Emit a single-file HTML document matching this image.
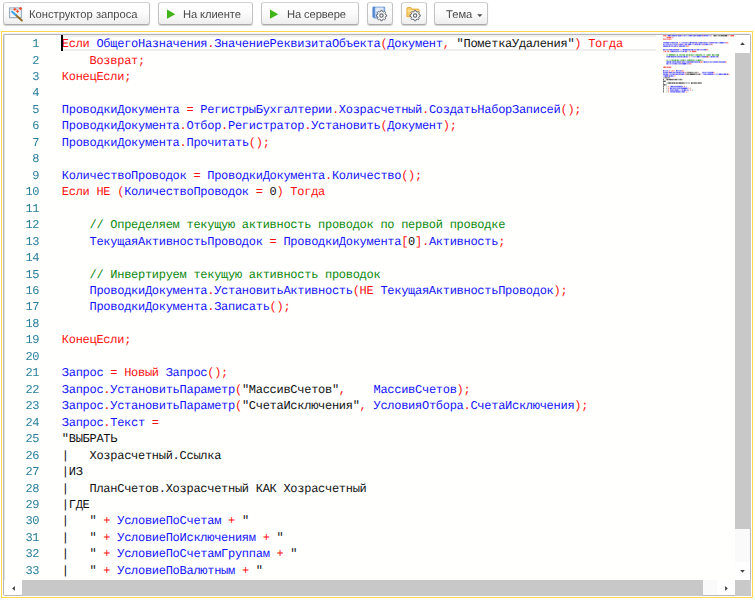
<!DOCTYPE html>
<html><head><meta charset="utf-8"><title>Консоль кода</title>
<style>
html,body{margin:0;padding:0;}
body{width:755px;height:600px;overflow:hidden;background:#fff;position:relative;font-family:"Liberation Sans",sans-serif;}
.btn{position:absolute;top:2px;height:23px;box-sizing:border-box;border:1px solid #c3c3c3;border-top-color:#d2d2d2;border-bottom-color:#a9a9a9;border-radius:3px;background:linear-gradient(#ffffff 0%,#fcfcfc 45%,#eeeeee 100%);box-shadow:0 1px 1px rgba(0,0,0,0.18);}
.btn .lbl{position:absolute;top:6px;font-size:11.2px;line-height:13px;color:#4a4a4a;white-space:pre;text-rendering:geometricPrecision;will-change:transform;}
.btn svg{position:absolute;}
.frame{position:absolute;left:1px;top:31px;width:752px;height:567px;box-sizing:border-box;border:1px solid #ffd84d;background:#fff;}
.inner{position:absolute;left:3px;top:34px;width:748px;height:562px;box-shadow:0 -1px 0 #f1f1f1, inset 1px 0 0 #e4e4e4;box-sizing:border-box;background:#fffffe;border:1px solid #b9b9b9;border-top-color:#b4b4b4;border-radius:2px;}
.ln,.t{position:absolute;font-family:"Liberation Mono",monospace;font-size:12.00px;line-height:16px;height:16px;letter-spacing:-0.2752px;white-space:pre;text-rendering:geometricPrecision;}
.ln{left:5px;width:34.3px;text-align:right;color:#2a7f9a;will-change:transform;}
.mm{position:absolute;left:663px;top:35px;}
.cur{position:absolute;left:61.3px;top:34.6px;width:2px;height:16.4px;background:#000;}
.clh{position:absolute;left:62px;top:35px;width:594px;height:16px;box-sizing:border-box;border-top:2px solid #f0f0f0;border-bottom:2px solid #eeeeee;}
.vs{position:absolute;left:735px;top:35px;width:15px;height:545px;background:#fafafa;}
.hs{position:absolute;left:4px;top:580px;width:731px;height:15px;background:#fafafa;}
.corner{position:absolute;left:735px;top:580px;width:15.5px;height:15.5px;background:#c9c9c9;}
.thumb{position:absolute;background:#c8c8c8;}
.ab{position:absolute;background:#fefefe;}
</style></head>
<body>
<!-- toolbar -->
<div class="btn" style="left:3px;width:147px;">
<svg width="16" height="16" viewBox="0 0 16 16" style="left:5.2px;top:3.5px">
<rect x="0.600" y="0.900" width="11.700" height="9.800" fill="#f3f5f9" stroke="#8fa0b8" stroke-width="1"/>
<rect x="1.100" y="1.400" width="10.700" height="1.700" fill="#cfd8e6"/>
<line x1="3.100" y1="4.800" x2="7" y2="8.100" stroke="#41a2ea" stroke-width="2.100" stroke-linecap="round"/>
<line x1="7.500" y1="8.600" x2="12.900" y2="13.500" stroke="#8a6a1c" stroke-width="1.900" stroke-linecap="round"/>
<path d="M5.90 0.40L6.61 1.59L7.80 2.30L6.61 3.01L5.90 4.20L5.19 3.01L4.00 2.30L5.19 1.59z" fill="#f4502a"/><path d="M8.50 2.40L9.21 3.59L10.40 4.30L9.21 5.01L8.50 6.20L7.79 5.01L6.60 4.30L7.79 3.59z" fill="#f4502a"/><path d="M11.50 -0.50L12.28 0.72L13.50 1.50L12.28 2.28L11.50 3.50L10.72 2.28L9.50 1.50L10.72 0.72z" fill="#f4502a"/>
</svg>
<span class="lbl" style="left:25.1px">Конструктор запроса</span></div>

<div class="btn" style="left:158px;width:95px;">
<svg width="10" height="11" viewBox="0 0 10 11" style="left:7px;top:6px"><path d="M1 0.5L9.300 5.150L1 9.800z" fill="#41b417"/></svg>
<span class="lbl" style="left:23.800px;letter-spacing:-0.1px">На клиенте</span></div>

<div class="btn" style="left:261px;width:97.7px;">
<svg width="10" height="11" viewBox="0 0 10 11" style="left:7px;top:6px"><path d="M1 0.5L9.300 5.150L1 9.800z" fill="#41b417"/></svg>
<span class="lbl" style="left:25px;letter-spacing:-0.1px">На сервере</span></div>

<div class="btn" style="left:367px;width:25.6px;">
<svg width="16" height="16" viewBox="0 0 16 16" style="left:4px;top:3px">
<path d="M1.1 1.2h11.600v10.800h-10.600l-1-1z" fill="#b9d0f0" stroke="#5c8bd0" stroke-width="0.9"/>
<rect x="0.7" y="0.800" width="2.100" height="10.700" fill="#4f84d2"/>
<rect x="3.800" y="1.7" width="7.2" height="3.600" fill="#eef3fb"/>
<rect x="3.800" y="2.700" width="7.2" height="0.7" fill="#c5d3e8"/>
<g transform="translate(9.5 9.6)"><path d="M-0.88 -4.11L-0.69 -5.15L0.69 -5.15L0.88 -4.11L2.28 -3.53L3.15 -4.13L4.13 -3.15L3.53 -2.28L4.11 -0.88L5.15 -0.69L5.15 0.69L4.11 0.88L3.53 2.28L4.13 3.15L3.15 4.13L2.28 3.53L0.88 4.11L0.69 5.15L-0.69 5.15L-0.88 4.11L-2.28 3.53L-3.15 4.13L-4.13 3.15L-3.53 2.28L-4.11 0.88L-5.15 0.69L-5.15 -0.69L-4.11 -0.88L-3.53 -2.28L-4.13 -3.15L-3.15 -4.13L-2.28 -3.53z" fill="#f7f7f7" stroke="#646a72" stroke-width="1" stroke-linejoin="round"/><circle r="1.7" fill="#fdfdfd" stroke="#646a72" stroke-width="1.1"/></g>
</svg></div>

<div class="btn" style="left:400.5px;width:26px;">
<svg width="16" height="16" viewBox="0 0 16 16" style="left:4.5px;top:3px">
<path d="M0.9 2.500q0-0.900 0.900-0.900h3.200l1.200 1.500h5.900q0.900 0 0.900 0.900v6.700h-12.100z" fill="#f9cf6e" stroke="#e7a531" stroke-width="0.9"/>
<path d="M1.4 4.2h11.100v1.300h-11.100z" fill="#fbe3a6"/>
<g transform="translate(9.1 9.6)"><path d="M-0.88 -4.11L-0.69 -5.15L0.69 -5.15L0.88 -4.11L2.28 -3.53L3.15 -4.13L4.13 -3.15L3.53 -2.28L4.11 -0.88L5.15 -0.69L5.15 0.69L4.11 0.88L3.53 2.28L4.13 3.15L3.15 4.13L2.28 3.53L0.88 4.11L0.69 5.15L-0.69 5.15L-0.88 4.11L-2.28 3.53L-3.15 4.13L-4.13 3.15L-3.53 2.28L-4.11 0.88L-5.15 0.69L-5.15 -0.69L-4.11 -0.88L-3.53 -2.28L-4.13 -3.15L-3.15 -4.13L-2.28 -3.53z" fill="#f7f7f7" stroke="#646a72" stroke-width="1" stroke-linejoin="round"/><circle r="1.7" fill="#fdfdfd" stroke="#646a72" stroke-width="1.1"/></g>
</svg></div>

<div class="btn" style="left:434px;width:54px;">
<span class="lbl" style="left:10.8px">Тема</span>
<svg width="6" height="4" viewBox="0 0 6 4" style="left:41.5px;top:11px"><path d="M0.2 0.2h5.2L2.800 3z" fill="#4a4a4a"/></svg>
</div>

<!-- editor -->
<div class="frame"></div>
<div class="inner"></div>
<div class="clh"></div>
<div class="ln" style="top:36.00px">1</div>
<span class="t" style="left:61.80px;top:36.00px;color:#ff1010">Если</span>
<span class="t" style="left:96.43px;top:36.00px;color:#1212ff">ОбщегоНазначения</span>
<span class="t" style="left:207.25px;top:36.00px;color:#ff1010">.</span>
<span class="t" style="left:214.17px;top:36.00px;color:#1212ff">ЗначениеРеквизитаОбъекта</span>
<span class="t" style="left:380.40px;top:36.00px;color:#ff1010">(</span>
<span class="t" style="left:387.32px;top:36.00px;color:#1212ff">Документ</span>
<span class="t" style="left:442.73px;top:36.00px;color:#ff1010">,</span>
<span class="t" style="left:456.58px;top:36.00px;color:#101010">"ПометкаУдаления"</span>
<span class="t" style="left:574.32px;top:36.00px;color:#ff1010">)</span>
<span class="t" style="left:588.18px;top:36.00px;color:#ff1010">Тогда</span>
<div class="ln" style="top:53.00px">2</div>
<span class="t" style="left:89.50px;top:53.00px;color:#ff1010">Возврат</span>
<span class="t" style="left:137.99px;top:53.00px;color:#ff1010">;</span>
<div class="ln" style="top:69.00px">3</div>
<span class="t" style="left:61.80px;top:69.00px;color:#ff1010">КонецЕсли</span>
<span class="t" style="left:124.13px;top:69.00px;color:#ff1010">;</span>
<div class="ln" style="top:85.00px">4</div>
<div class="ln" style="top:102.00px">5</div>
<span class="t" style="left:61.80px;top:102.00px;color:#1212ff">ПроводкиДокумента</span>
<span class="t" style="left:186.47px;top:102.00px;color:#ff1010">=</span>
<span class="t" style="left:200.32px;top:102.00px;color:#1212ff">РегистрыБухгалтерии</span>
<span class="t" style="left:331.91px;top:102.00px;color:#ff1010">.</span>
<span class="t" style="left:338.84px;top:102.00px;color:#1212ff">Хозрасчетный</span>
<span class="t" style="left:421.95px;top:102.00px;color:#ff1010">.</span>
<span class="t" style="left:428.88px;top:102.00px;color:#1212ff">СоздатьНаборЗаписей</span>
<span class="t" style="left:560.47px;top:102.00px;color:#ff1010">();</span>
<div class="ln" style="top:118.00px">6</div>
<span class="t" style="left:61.80px;top:118.00px;color:#1212ff">ПроводкиДокумента</span>
<span class="t" style="left:179.54px;top:118.00px;color:#ff1010">.</span>
<span class="t" style="left:186.47px;top:118.00px;color:#1212ff">Отбор</span>
<span class="t" style="left:221.10px;top:118.00px;color:#ff1010">.</span>
<span class="t" style="left:228.02px;top:118.00px;color:#1212ff">Регистратор</span>
<span class="t" style="left:304.21px;top:118.00px;color:#ff1010">.</span>
<span class="t" style="left:311.14px;top:118.00px;color:#1212ff">Установить</span>
<span class="t" style="left:380.40px;top:118.00px;color:#ff1010">(</span>
<span class="t" style="left:387.32px;top:118.00px;color:#1212ff">Документ</span>
<span class="t" style="left:442.73px;top:118.00px;color:#ff1010">);</span>
<div class="ln" style="top:135.00px">7</div>
<span class="t" style="left:61.80px;top:135.00px;color:#1212ff">ПроводкиДокумента</span>
<span class="t" style="left:179.54px;top:135.00px;color:#ff1010">.</span>
<span class="t" style="left:186.47px;top:135.00px;color:#1212ff">Прочитать</span>
<span class="t" style="left:248.80px;top:135.00px;color:#ff1010">();</span>
<div class="ln" style="top:151.00px">8</div>
<div class="ln" style="top:168.00px">9</div>
<span class="t" style="left:61.80px;top:168.00px;color:#1212ff">КоличествоПроводок</span>
<span class="t" style="left:193.39px;top:168.00px;color:#ff1010">=</span>
<span class="t" style="left:207.25px;top:168.00px;color:#1212ff">ПроводкиДокумента</span>
<span class="t" style="left:324.99px;top:168.00px;color:#ff1010">.</span>
<span class="t" style="left:331.91px;top:168.00px;color:#1212ff">Количество</span>
<span class="t" style="left:401.17px;top:168.00px;color:#ff1010">();</span>
<div class="ln" style="top:184.00px">10</div>
<span class="t" style="left:61.80px;top:184.00px;color:#ff1010">Если</span>
<span class="t" style="left:96.43px;top:184.00px;color:#ff1010">НЕ</span>
<span class="t" style="left:117.21px;top:184.00px;color:#ff1010">(</span>
<span class="t" style="left:124.13px;top:184.00px;color:#1212ff">КоличествоПроводок</span>
<span class="t" style="left:255.73px;top:184.00px;color:#ff1010">=</span>
<span class="t" style="left:269.58px;top:184.00px;color:#101010">0</span>
<span class="t" style="left:276.51px;top:184.00px;color:#ff1010">)</span>
<span class="t" style="left:290.36px;top:184.00px;color:#ff1010">Тогда</span>
<div class="ln" style="top:201.00px">11</div>
<div class="ln" style="top:217.00px">12</div>
<span class="t" style="left:89.50px;top:217.00px;color:#0c880c">// Определяем текущую активность проводок по первой проводке</span>
<div class="ln" style="top:234.00px">13</div>
<span class="t" style="left:89.50px;top:234.00px;color:#1212ff">ТекущаяАктивностьПроводок</span>
<span class="t" style="left:269.58px;top:234.00px;color:#ff1010">=</span>
<span class="t" style="left:283.43px;top:234.00px;color:#1212ff">ПроводкиДокумента</span>
<span class="t" style="left:401.17px;top:234.00px;color:#ff1010">[</span>
<span class="t" style="left:408.10px;top:234.00px;color:#101010">0</span>
<span class="t" style="left:415.03px;top:234.00px;color:#ff1010">].</span>
<span class="t" style="left:428.88px;top:234.00px;color:#1212ff">Активность</span>
<span class="t" style="left:498.14px;top:234.00px;color:#ff1010">;</span>
<div class="ln" style="top:250.00px">14</div>
<div class="ln" style="top:267.00px">15</div>
<span class="t" style="left:89.50px;top:267.00px;color:#0c880c">// Инвертируем текущую активность проводок</span>
<div class="ln" style="top:283.00px">16</div>
<span class="t" style="left:89.50px;top:283.00px;color:#1212ff">ПроводкиДокумента</span>
<span class="t" style="left:207.25px;top:283.00px;color:#ff1010">.</span>
<span class="t" style="left:214.17px;top:283.00px;color:#1212ff">УстановитьАктивность</span>
<span class="t" style="left:352.69px;top:283.00px;color:#ff1010">(</span>
<span class="t" style="left:359.62px;top:283.00px;color:#ff1010">НЕ</span>
<span class="t" style="left:380.40px;top:283.00px;color:#1212ff">ТекущаяАктивностьПроводок</span>
<span class="t" style="left:553.55px;top:283.00px;color:#ff1010">);</span>
<div class="ln" style="top:299.00px">17</div>
<span class="t" style="left:89.50px;top:299.00px;color:#1212ff">ПроводкиДокумента</span>
<span class="t" style="left:207.25px;top:299.00px;color:#ff1010">.</span>
<span class="t" style="left:214.17px;top:299.00px;color:#1212ff">Записать</span>
<span class="t" style="left:269.58px;top:299.00px;color:#ff1010">();</span>
<div class="ln" style="top:316.00px">18</div>
<div class="ln" style="top:332.00px">19</div>
<span class="t" style="left:61.80px;top:332.00px;color:#ff1010">КонецЕсли</span>
<span class="t" style="left:124.13px;top:332.00px;color:#ff1010">;</span>
<div class="ln" style="top:349.00px">20</div>
<div class="ln" style="top:365.00px">21</div>
<span class="t" style="left:61.80px;top:365.00px;color:#1212ff">Запрос</span>
<span class="t" style="left:110.28px;top:365.00px;color:#ff1010">=</span>
<span class="t" style="left:124.13px;top:365.00px;color:#ff1010">Новый</span>
<span class="t" style="left:165.69px;top:365.00px;color:#1212ff">Запрос</span>
<span class="t" style="left:207.25px;top:365.00px;color:#ff1010">();</span>
<div class="ln" style="top:382.00px">22</div>
<span class="t" style="left:61.80px;top:382.00px;color:#1212ff">Запрос</span>
<span class="t" style="left:103.36px;top:382.00px;color:#ff1010">.</span>
<span class="t" style="left:110.28px;top:382.00px;color:#1212ff">УстановитьПараметр</span>
<span class="t" style="left:234.95px;top:382.00px;color:#ff1010">(</span>
<span class="t" style="left:241.88px;top:382.00px;color:#101010">"МассивСчетов"</span>
<span class="t" style="left:338.84px;top:382.00px;color:#ff1010">,</span>
<span class="t" style="left:373.47px;top:382.00px;color:#1212ff">МассивСчетов</span>
<span class="t" style="left:456.58px;top:382.00px;color:#ff1010">);</span>
<div class="ln" style="top:398.00px">23</div>
<span class="t" style="left:61.80px;top:398.00px;color:#1212ff">Запрос</span>
<span class="t" style="left:103.36px;top:398.00px;color:#ff1010">.</span>
<span class="t" style="left:110.28px;top:398.00px;color:#1212ff">УстановитьПараметр</span>
<span class="t" style="left:234.95px;top:398.00px;color:#ff1010">(</span>
<span class="t" style="left:241.88px;top:398.00px;color:#101010">"СчетаИсключения"</span>
<span class="t" style="left:359.62px;top:398.00px;color:#ff1010">,</span>
<span class="t" style="left:373.47px;top:398.00px;color:#1212ff">УсловияОтбора</span>
<span class="t" style="left:463.51px;top:398.00px;color:#ff1010">.</span>
<span class="t" style="left:470.43px;top:398.00px;color:#1212ff">СчетаИсключения</span>
<span class="t" style="left:574.32px;top:398.00px;color:#ff1010">);</span>
<div class="ln" style="top:415.00px">24</div>
<span class="t" style="left:61.80px;top:415.00px;color:#1212ff">Запрос</span>
<span class="t" style="left:103.36px;top:415.00px;color:#ff1010">.</span>
<span class="t" style="left:110.28px;top:415.00px;color:#1212ff">Текст</span>
<span class="t" style="left:151.84px;top:415.00px;color:#ff1010">=</span>
<div class="ln" style="top:431.00px">25</div>
<span class="t" style="left:61.80px;top:431.00px;color:#101010">"ВЫБРАТЬ</span>
<div class="ln" style="top:448.00px">26</div>
<span class="t" style="left:61.80px;top:448.00px;color:#101010">|   Хозрасчетный.Ссылка</span>
<div class="ln" style="top:464.00px">27</div>
<span class="t" style="left:61.80px;top:464.00px;color:#101010">|ИЗ</span>
<div class="ln" style="top:481.00px">28</div>
<span class="t" style="left:61.80px;top:481.00px;color:#101010">|   ПланСчетов.Хозрасчетный КАК Хозрасчетный</span>
<div class="ln" style="top:497.00px">29</div>
<span class="t" style="left:61.80px;top:497.00px;color:#101010">|ГДЕ</span>
<div class="ln" style="top:513.00px">30</div>
<span class="t" style="left:61.80px;top:513.00px;color:#101010">|   "</span>
<span class="t" style="left:103.36px;top:513.00px;color:#ff1010">+</span>
<span class="t" style="left:117.21px;top:513.00px;color:#1212ff">УсловиеПоСчетам</span>
<span class="t" style="left:228.02px;top:513.00px;color:#ff1010">+</span>
<span class="t" style="left:241.88px;top:513.00px;color:#101010">"</span>
<div class="ln" style="top:530.00px">31</div>
<span class="t" style="left:61.80px;top:530.00px;color:#101010">|   "</span>
<span class="t" style="left:103.36px;top:530.00px;color:#ff1010">+</span>
<span class="t" style="left:117.21px;top:530.00px;color:#1212ff">УсловиеПоИсключениям</span>
<span class="t" style="left:262.65px;top:530.00px;color:#ff1010">+</span>
<span class="t" style="left:276.51px;top:530.00px;color:#101010">"</span>
<div class="ln" style="top:546.00px">32</div>
<span class="t" style="left:61.80px;top:546.00px;color:#101010">|   "</span>
<span class="t" style="left:103.36px;top:546.00px;color:#ff1010">+</span>
<span class="t" style="left:117.21px;top:546.00px;color:#1212ff">УсловиеПоСчетамГруппам</span>
<span class="t" style="left:276.51px;top:546.00px;color:#ff1010">+</span>
<span class="t" style="left:290.36px;top:546.00px;color:#101010">"</span>
<div class="ln" style="top:563.00px">33</div>
<span class="t" style="left:61.80px;top:563.00px;color:#101010">|   "</span>
<span class="t" style="left:103.36px;top:563.00px;color:#ff1010">+</span>
<span class="t" style="left:117.21px;top:563.00px;color:#1212ff">УсловиеПоВалютным</span>
<span class="t" style="left:241.88px;top:563.00px;color:#ff1010">+</span>
<span class="t" style="left:255.73px;top:563.00px;color:#101010">"</span>
<div class="cur"></div>
<svg class="mm" width="72" height="70" viewBox="0 0 72 70"><g opacity="0.9"><rect x="0.00" y="0.00" width="0.93" height="1.35" fill="#ff1010" opacity="0.63"/><rect x="0.88" y="0.00" width="0.93" height="1.35" fill="#ff1010" opacity="0.53"/><rect x="1.75" y="0.00" width="0.93" height="1.35" fill="#ff1010" opacity="0.87"/><rect x="2.62" y="0.00" width="0.93" height="1.35" fill="#ff1010" opacity="0.61"/><rect x="4.38" y="0.00" width="0.93" height="1.35" fill="#1212ff" opacity="0.45"/><rect x="5.25" y="0.00" width="0.93" height="1.35" fill="#1212ff" opacity="0.88"/><rect x="6.12" y="0.00" width="0.93" height="1.35" fill="#1212ff" opacity="0.91"/><rect x="7.00" y="0.00" width="0.93" height="1.35" fill="#1212ff" opacity="0.57"/><rect x="7.88" y="0.00" width="0.93" height="1.35" fill="#1212ff" opacity="0.33"/><rect x="8.75" y="0.00" width="0.93" height="1.35" fill="#1212ff" opacity="0.57"/><rect x="9.62" y="0.00" width="0.93" height="1.35" fill="#1212ff" opacity="0.96"/><rect x="10.50" y="0.00" width="0.93" height="1.35" fill="#1212ff" opacity="0.57"/><rect x="11.38" y="0.00" width="0.93" height="1.35" fill="#1212ff" opacity="0.93"/><rect x="12.25" y="0.00" width="0.93" height="1.35" fill="#1212ff" opacity="0.33"/><rect x="13.12" y="0.00" width="0.93" height="1.35" fill="#1212ff" opacity="0.67"/><rect x="14.00" y="0.00" width="0.93" height="1.35" fill="#1212ff" opacity="0.25"/><rect x="14.88" y="0.00" width="0.93" height="1.35" fill="#1212ff" opacity="0.73"/><rect x="15.75" y="0.00" width="0.93" height="1.35" fill="#1212ff" opacity="0.58"/><rect x="16.62" y="0.00" width="0.93" height="1.35" fill="#1212ff" opacity="0.88"/><rect x="17.50" y="0.00" width="0.93" height="1.35" fill="#1212ff" opacity="0.83"/><rect x="18.38" y="0.00" width="0.93" height="1.35" fill="#ff1010" opacity="0.30"/><rect x="19.25" y="0.00" width="0.93" height="1.35" fill="#1212ff" opacity="0.46"/><rect x="20.12" y="0.00" width="0.93" height="1.35" fill="#1212ff" opacity="0.30"/><rect x="21.00" y="0.00" width="0.93" height="1.35" fill="#1212ff" opacity="0.60"/><rect x="21.88" y="0.00" width="0.93" height="1.35" fill="#1212ff" opacity="0.48"/><rect x="22.75" y="0.00" width="0.93" height="1.35" fill="#1212ff" opacity="0.26"/><rect x="23.62" y="0.00" width="0.93" height="1.35" fill="#1212ff" opacity="0.40"/><rect x="24.50" y="0.00" width="0.93" height="1.35" fill="#1212ff" opacity="0.23"/><rect x="25.38" y="0.00" width="0.93" height="1.35" fill="#1212ff" opacity="0.53"/><rect x="26.25" y="0.00" width="0.93" height="1.35" fill="#1212ff" opacity="0.71"/><rect x="27.12" y="0.00" width="0.93" height="1.35" fill="#1212ff" opacity="0.83"/><rect x="28.00" y="0.00" width="0.93" height="1.35" fill="#1212ff" opacity="0.63"/><rect x="28.88" y="0.00" width="0.93" height="1.35" fill="#1212ff" opacity="0.43"/><rect x="29.75" y="0.00" width="0.93" height="1.35" fill="#1212ff" opacity="0.36"/><rect x="30.62" y="0.00" width="0.93" height="1.35" fill="#1212ff" opacity="0.76"/><rect x="31.50" y="0.00" width="0.93" height="1.35" fill="#1212ff" opacity="0.88"/><rect x="32.38" y="0.00" width="0.93" height="1.35" fill="#1212ff" opacity="0.54"/><rect x="33.25" y="0.00" width="0.93" height="1.35" fill="#1212ff" opacity="0.46"/><rect x="34.12" y="0.00" width="0.93" height="1.35" fill="#1212ff" opacity="0.62"/><rect x="35.00" y="0.00" width="0.93" height="1.35" fill="#1212ff" opacity="0.68"/><rect x="35.88" y="0.00" width="0.93" height="1.35" fill="#1212ff" opacity="0.84"/><rect x="36.75" y="0.00" width="0.93" height="1.35" fill="#1212ff" opacity="0.92"/><rect x="37.62" y="0.00" width="0.93" height="1.35" fill="#1212ff" opacity="0.50"/><rect x="38.50" y="0.00" width="0.93" height="1.35" fill="#1212ff" opacity="0.50"/><rect x="39.38" y="0.00" width="0.93" height="1.35" fill="#1212ff" opacity="0.74"/><rect x="40.25" y="0.00" width="0.93" height="1.35" fill="#ff1010" opacity="0.55"/><rect x="41.12" y="0.00" width="0.93" height="1.35" fill="#1212ff" opacity="0.81"/><rect x="42.00" y="0.00" width="0.93" height="1.35" fill="#1212ff" opacity="0.51"/><rect x="42.88" y="0.00" width="0.93" height="1.35" fill="#1212ff" opacity="0.65"/><rect x="43.75" y="0.00" width="0.93" height="1.35" fill="#1212ff" opacity="0.74"/><rect x="44.62" y="0.00" width="0.93" height="1.35" fill="#1212ff" opacity="0.52"/><rect x="45.50" y="0.00" width="0.93" height="1.35" fill="#1212ff" opacity="0.23"/><rect x="46.38" y="0.00" width="0.93" height="1.35" fill="#1212ff" opacity="0.32"/><rect x="47.25" y="0.00" width="0.93" height="1.35" fill="#1212ff" opacity="0.46"/><rect x="48.12" y="0.00" width="0.93" height="1.35" fill="#ff1010" opacity="0.30"/><rect x="49.88" y="0.00" width="0.93" height="1.35" fill="#101010" opacity="0.30"/><rect x="50.75" y="0.00" width="0.93" height="1.35" fill="#101010" opacity="0.93"/><rect x="51.62" y="0.00" width="0.93" height="1.35" fill="#101010" opacity="0.62"/><rect x="52.50" y="0.00" width="0.93" height="1.35" fill="#101010" opacity="0.84"/><rect x="53.38" y="0.00" width="0.93" height="1.35" fill="#101010" opacity="0.26"/><rect x="54.25" y="0.00" width="0.93" height="1.35" fill="#101010" opacity="0.24"/><rect x="55.12" y="0.00" width="0.93" height="1.35" fill="#101010" opacity="0.48"/><rect x="56.00" y="0.00" width="0.93" height="1.35" fill="#101010" opacity="0.57"/><rect x="56.88" y="0.00" width="0.93" height="1.35" fill="#101010" opacity="0.26"/><rect x="57.75" y="0.00" width="0.93" height="1.35" fill="#101010" opacity="0.96"/><rect x="58.62" y="0.00" width="0.93" height="1.35" fill="#101010" opacity="0.67"/><rect x="59.50" y="0.00" width="0.93" height="1.35" fill="#101010" opacity="0.86"/><rect x="60.38" y="0.00" width="0.93" height="1.35" fill="#101010" opacity="0.73"/><rect x="61.25" y="0.00" width="0.93" height="1.35" fill="#101010" opacity="0.58"/><rect x="62.12" y="0.00" width="0.93" height="1.35" fill="#101010" opacity="0.88"/><rect x="63.00" y="0.00" width="0.93" height="1.35" fill="#101010" opacity="0.83"/><rect x="63.88" y="0.00" width="0.93" height="1.35" fill="#101010" opacity="0.30"/><rect x="64.75" y="0.00" width="0.93" height="1.35" fill="#ff1010" opacity="0.55"/><rect x="66.50" y="0.00" width="0.93" height="1.35" fill="#ff1010" opacity="0.37"/><rect x="67.38" y="0.00" width="0.93" height="1.35" fill="#ff1010" opacity="0.51"/><rect x="68.25" y="0.00" width="0.93" height="1.35" fill="#ff1010" opacity="0.92"/><rect x="69.12" y="0.00" width="0.93" height="1.35" fill="#ff1010" opacity="0.86"/><rect x="70.00" y="0.00" width="0.93" height="1.35" fill="#ff1010" opacity="0.86"/><rect x="3.50" y="1.76" width="0.93" height="1.35" fill="#ff1010" opacity="0.65"/><rect x="4.38" y="1.76" width="0.93" height="1.35" fill="#ff1010" opacity="0.62"/><rect x="5.25" y="1.76" width="0.93" height="1.35" fill="#ff1010" opacity="0.67"/><rect x="6.12" y="1.76" width="0.93" height="1.35" fill="#ff1010" opacity="0.90"/><rect x="7.00" y="1.76" width="0.93" height="1.35" fill="#ff1010" opacity="0.71"/><rect x="7.88" y="1.76" width="0.93" height="1.35" fill="#ff1010" opacity="0.23"/><rect x="8.75" y="1.76" width="0.93" height="1.35" fill="#ff1010" opacity="0.46"/><rect x="9.62" y="1.76" width="0.93" height="1.35" fill="#ff1010" opacity="0.30"/><rect x="0.00" y="3.51" width="0.93" height="1.35" fill="#ff1010" opacity="0.58"/><rect x="0.88" y="3.51" width="0.93" height="1.35" fill="#ff1010" opacity="0.45"/><rect x="1.75" y="3.51" width="0.93" height="1.35" fill="#ff1010" opacity="0.80"/><rect x="2.62" y="3.51" width="0.93" height="1.35" fill="#ff1010" opacity="0.23"/><rect x="3.50" y="3.51" width="0.93" height="1.35" fill="#ff1010" opacity="0.40"/><rect x="4.38" y="3.51" width="0.93" height="1.35" fill="#ff1010" opacity="0.61"/><rect x="5.25" y="3.51" width="0.93" height="1.35" fill="#ff1010" opacity="0.46"/><rect x="6.12" y="3.51" width="0.93" height="1.35" fill="#ff1010" opacity="0.66"/><rect x="7.00" y="3.51" width="0.93" height="1.35" fill="#ff1010" opacity="0.48"/><rect x="7.88" y="3.51" width="0.93" height="1.35" fill="#ff1010" opacity="0.30"/><rect x="0.00" y="7.02" width="0.93" height="1.35" fill="#1212ff" opacity="0.42"/><rect x="0.88" y="7.02" width="0.93" height="1.35" fill="#1212ff" opacity="0.71"/><rect x="1.75" y="7.02" width="0.93" height="1.35" fill="#1212ff" opacity="0.54"/><rect x="2.62" y="7.02" width="0.93" height="1.35" fill="#1212ff" opacity="0.64"/><rect x="3.50" y="7.02" width="0.93" height="1.35" fill="#1212ff" opacity="0.87"/><rect x="4.38" y="7.02" width="0.93" height="1.35" fill="#1212ff" opacity="0.96"/><rect x="5.25" y="7.02" width="0.93" height="1.35" fill="#1212ff" opacity="0.63"/><rect x="6.12" y="7.02" width="0.93" height="1.35" fill="#1212ff" opacity="0.32"/><rect x="7.00" y="7.02" width="0.93" height="1.35" fill="#1212ff" opacity="0.53"/><rect x="7.88" y="7.02" width="0.93" height="1.35" fill="#1212ff" opacity="0.38"/><rect x="8.75" y="7.02" width="0.93" height="1.35" fill="#1212ff" opacity="0.75"/><rect x="9.62" y="7.02" width="0.93" height="1.35" fill="#1212ff" opacity="0.83"/><rect x="10.50" y="7.02" width="0.93" height="1.35" fill="#1212ff" opacity="0.33"/><rect x="11.38" y="7.02" width="0.93" height="1.35" fill="#1212ff" opacity="0.83"/><rect x="12.25" y="7.02" width="0.93" height="1.35" fill="#1212ff" opacity="0.38"/><rect x="13.12" y="7.02" width="0.93" height="1.35" fill="#1212ff" opacity="0.60"/><rect x="14.00" y="7.02" width="0.93" height="1.35" fill="#1212ff" opacity="0.66"/><rect x="15.75" y="7.02" width="0.93" height="1.35" fill="#ff1010" opacity="0.55"/><rect x="17.50" y="7.02" width="0.93" height="1.35" fill="#1212ff" opacity="0.33"/><rect x="18.38" y="7.02" width="0.93" height="1.35" fill="#1212ff" opacity="0.23"/><rect x="19.25" y="7.02" width="0.93" height="1.35" fill="#1212ff" opacity="0.51"/><rect x="20.12" y="7.02" width="0.93" height="1.35" fill="#1212ff" opacity="0.56"/><rect x="21.00" y="7.02" width="0.93" height="1.35" fill="#1212ff" opacity="0.46"/><rect x="21.88" y="7.02" width="0.93" height="1.35" fill="#1212ff" opacity="0.38"/><rect x="22.75" y="7.02" width="0.93" height="1.35" fill="#1212ff" opacity="0.72"/><rect x="23.62" y="7.02" width="0.93" height="1.35" fill="#1212ff" opacity="0.51"/><rect x="24.50" y="7.02" width="0.93" height="1.35" fill="#1212ff" opacity="0.27"/><rect x="25.38" y="7.02" width="0.93" height="1.35" fill="#1212ff" opacity="0.36"/><rect x="26.25" y="7.02" width="0.93" height="1.35" fill="#1212ff" opacity="0.41"/><rect x="27.12" y="7.02" width="0.93" height="1.35" fill="#1212ff" opacity="0.96"/><rect x="28.00" y="7.02" width="0.93" height="1.35" fill="#1212ff" opacity="0.46"/><rect x="28.88" y="7.02" width="0.93" height="1.35" fill="#1212ff" opacity="0.62"/><rect x="29.75" y="7.02" width="0.93" height="1.35" fill="#1212ff" opacity="0.73"/><rect x="30.62" y="7.02" width="0.93" height="1.35" fill="#1212ff" opacity="0.76"/><rect x="31.50" y="7.02" width="0.93" height="1.35" fill="#1212ff" opacity="0.25"/><rect x="32.38" y="7.02" width="0.93" height="1.35" fill="#1212ff" opacity="0.74"/><rect x="33.25" y="7.02" width="0.93" height="1.35" fill="#1212ff" opacity="0.82"/><rect x="34.12" y="7.02" width="0.93" height="1.35" fill="#ff1010" opacity="0.30"/><rect x="35.00" y="7.02" width="0.93" height="1.35" fill="#1212ff" opacity="0.38"/><rect x="35.88" y="7.02" width="0.93" height="1.35" fill="#1212ff" opacity="0.57"/><rect x="36.75" y="7.02" width="0.93" height="1.35" fill="#1212ff" opacity="0.74"/><rect x="37.62" y="7.02" width="0.93" height="1.35" fill="#1212ff" opacity="0.90"/><rect x="38.50" y="7.02" width="0.93" height="1.35" fill="#1212ff" opacity="0.69"/><rect x="39.38" y="7.02" width="0.93" height="1.35" fill="#1212ff" opacity="0.31"/><rect x="40.25" y="7.02" width="0.93" height="1.35" fill="#1212ff" opacity="0.62"/><rect x="41.12" y="7.02" width="0.93" height="1.35" fill="#1212ff" opacity="0.68"/><rect x="42.00" y="7.02" width="0.93" height="1.35" fill="#1212ff" opacity="0.41"/><rect x="42.88" y="7.02" width="0.93" height="1.35" fill="#1212ff" opacity="0.58"/><rect x="43.75" y="7.02" width="0.93" height="1.35" fill="#1212ff" opacity="0.51"/><rect x="44.62" y="7.02" width="0.93" height="1.35" fill="#1212ff" opacity="0.28"/><rect x="45.50" y="7.02" width="0.93" height="1.35" fill="#ff1010" opacity="0.30"/><rect x="46.38" y="7.02" width="0.93" height="1.35" fill="#1212ff" opacity="0.58"/><rect x="47.25" y="7.02" width="0.93" height="1.35" fill="#1212ff" opacity="0.57"/><rect x="48.12" y="7.02" width="0.93" height="1.35" fill="#1212ff" opacity="0.74"/><rect x="49.00" y="7.02" width="0.93" height="1.35" fill="#1212ff" opacity="0.63"/><rect x="49.88" y="7.02" width="0.93" height="1.35" fill="#1212ff" opacity="0.69"/><rect x="50.75" y="7.02" width="0.93" height="1.35" fill="#1212ff" opacity="0.38"/><rect x="51.62" y="7.02" width="0.93" height="1.35" fill="#1212ff" opacity="0.44"/><rect x="52.50" y="7.02" width="0.93" height="1.35" fill="#1212ff" opacity="0.92"/><rect x="53.38" y="7.02" width="0.93" height="1.35" fill="#1212ff" opacity="0.66"/><rect x="54.25" y="7.02" width="0.93" height="1.35" fill="#1212ff" opacity="0.30"/><rect x="55.12" y="7.02" width="0.93" height="1.35" fill="#1212ff" opacity="0.30"/><rect x="56.00" y="7.02" width="0.93" height="1.35" fill="#1212ff" opacity="0.41"/><rect x="56.88" y="7.02" width="0.93" height="1.35" fill="#1212ff" opacity="0.78"/><rect x="57.75" y="7.02" width="0.93" height="1.35" fill="#1212ff" opacity="0.86"/><rect x="58.62" y="7.02" width="0.93" height="1.35" fill="#1212ff" opacity="0.93"/><rect x="59.50" y="7.02" width="0.93" height="1.35" fill="#1212ff" opacity="0.96"/><rect x="60.38" y="7.02" width="0.93" height="1.35" fill="#1212ff" opacity="0.36"/><rect x="61.25" y="7.02" width="0.93" height="1.35" fill="#1212ff" opacity="0.33"/><rect x="62.12" y="7.02" width="0.93" height="1.35" fill="#1212ff" opacity="0.45"/><rect x="63.00" y="7.02" width="0.93" height="1.35" fill="#ff1010" opacity="0.55"/><rect x="63.88" y="7.02" width="0.93" height="1.35" fill="#ff1010" opacity="0.55"/><rect x="64.75" y="7.02" width="0.93" height="1.35" fill="#ff1010" opacity="0.30"/><rect x="0.00" y="8.77" width="0.93" height="1.35" fill="#1212ff" opacity="0.66"/><rect x="0.88" y="8.77" width="0.93" height="1.35" fill="#1212ff" opacity="0.34"/><rect x="1.75" y="8.77" width="0.93" height="1.35" fill="#1212ff" opacity="0.30"/><rect x="2.62" y="8.77" width="0.93" height="1.35" fill="#1212ff" opacity="0.32"/><rect x="3.50" y="8.77" width="0.93" height="1.35" fill="#1212ff" opacity="0.71"/><rect x="4.38" y="8.77" width="0.93" height="1.35" fill="#1212ff" opacity="0.42"/><rect x="5.25" y="8.77" width="0.93" height="1.35" fill="#1212ff" opacity="0.51"/><rect x="6.12" y="8.77" width="0.93" height="1.35" fill="#1212ff" opacity="0.36"/><rect x="7.00" y="8.77" width="0.93" height="1.35" fill="#1212ff" opacity="0.50"/><rect x="7.88" y="8.77" width="0.93" height="1.35" fill="#1212ff" opacity="0.30"/><rect x="8.75" y="8.77" width="0.93" height="1.35" fill="#1212ff" opacity="0.46"/><rect x="9.62" y="8.77" width="0.93" height="1.35" fill="#1212ff" opacity="0.23"/><rect x="10.50" y="8.77" width="0.93" height="1.35" fill="#1212ff" opacity="0.60"/><rect x="11.38" y="8.77" width="0.93" height="1.35" fill="#1212ff" opacity="0.48"/><rect x="12.25" y="8.77" width="0.93" height="1.35" fill="#1212ff" opacity="0.43"/><rect x="13.12" y="8.77" width="0.93" height="1.35" fill="#1212ff" opacity="0.63"/><rect x="14.00" y="8.77" width="0.93" height="1.35" fill="#1212ff" opacity="0.41"/><rect x="14.88" y="8.77" width="0.93" height="1.35" fill="#ff1010" opacity="0.30"/><rect x="15.75" y="8.77" width="0.93" height="1.35" fill="#1212ff" opacity="0.38"/><rect x="16.62" y="8.77" width="0.93" height="1.35" fill="#1212ff" opacity="0.96"/><rect x="17.50" y="8.77" width="0.93" height="1.35" fill="#1212ff" opacity="0.43"/><rect x="18.38" y="8.77" width="0.93" height="1.35" fill="#1212ff" opacity="0.87"/><rect x="19.25" y="8.77" width="0.93" height="1.35" fill="#1212ff" opacity="0.42"/><rect x="20.12" y="8.77" width="0.93" height="1.35" fill="#ff1010" opacity="0.30"/><rect x="21.00" y="8.77" width="0.93" height="1.35" fill="#1212ff" opacity="0.32"/><rect x="21.88" y="8.77" width="0.93" height="1.35" fill="#1212ff" opacity="0.57"/><rect x="22.75" y="8.77" width="0.93" height="1.35" fill="#1212ff" opacity="0.91"/><rect x="23.62" y="8.77" width="0.93" height="1.35" fill="#1212ff" opacity="0.24"/><rect x="24.50" y="8.77" width="0.93" height="1.35" fill="#1212ff" opacity="0.31"/><rect x="25.38" y="8.77" width="0.93" height="1.35" fill="#1212ff" opacity="0.97"/><rect x="26.25" y="8.77" width="0.93" height="1.35" fill="#1212ff" opacity="0.94"/><rect x="27.12" y="8.77" width="0.93" height="1.35" fill="#1212ff" opacity="0.66"/><rect x="28.00" y="8.77" width="0.93" height="1.35" fill="#1212ff" opacity="0.23"/><rect x="28.88" y="8.77" width="0.93" height="1.35" fill="#1212ff" opacity="0.30"/><rect x="29.75" y="8.77" width="0.93" height="1.35" fill="#1212ff" opacity="0.41"/><rect x="30.62" y="8.77" width="0.93" height="1.35" fill="#ff1010" opacity="0.30"/><rect x="31.50" y="8.77" width="0.93" height="1.35" fill="#1212ff" opacity="0.52"/><rect x="32.38" y="8.77" width="0.93" height="1.35" fill="#1212ff" opacity="0.91"/><rect x="33.25" y="8.77" width="0.93" height="1.35" fill="#1212ff" opacity="0.46"/><rect x="34.12" y="8.77" width="0.93" height="1.35" fill="#1212ff" opacity="0.69"/><rect x="35.00" y="8.77" width="0.93" height="1.35" fill="#1212ff" opacity="0.33"/><rect x="35.88" y="8.77" width="0.93" height="1.35" fill="#1212ff" opacity="0.95"/><rect x="36.75" y="8.77" width="0.93" height="1.35" fill="#1212ff" opacity="0.43"/><rect x="37.62" y="8.77" width="0.93" height="1.35" fill="#1212ff" opacity="0.36"/><rect x="38.50" y="8.77" width="0.93" height="1.35" fill="#1212ff" opacity="0.23"/><rect x="39.38" y="8.77" width="0.93" height="1.35" fill="#1212ff" opacity="0.61"/><rect x="40.25" y="8.77" width="0.93" height="1.35" fill="#ff1010" opacity="0.55"/><rect x="41.12" y="8.77" width="0.93" height="1.35" fill="#1212ff" opacity="0.54"/><rect x="42.00" y="8.77" width="0.93" height="1.35" fill="#1212ff" opacity="0.54"/><rect x="42.88" y="8.77" width="0.93" height="1.35" fill="#1212ff" opacity="0.88"/><rect x="43.75" y="8.77" width="0.93" height="1.35" fill="#1212ff" opacity="0.70"/><rect x="44.62" y="8.77" width="0.93" height="1.35" fill="#1212ff" opacity="0.46"/><rect x="45.50" y="8.77" width="0.93" height="1.35" fill="#1212ff" opacity="0.43"/><rect x="46.38" y="8.77" width="0.93" height="1.35" fill="#1212ff" opacity="0.40"/><rect x="47.25" y="8.77" width="0.93" height="1.35" fill="#1212ff" opacity="0.41"/><rect x="48.12" y="8.77" width="0.93" height="1.35" fill="#ff1010" opacity="0.55"/><rect x="49.00" y="8.77" width="0.93" height="1.35" fill="#ff1010" opacity="0.30"/><rect x="0.00" y="10.53" width="0.93" height="1.35" fill="#1212ff" opacity="0.61"/><rect x="0.88" y="10.53" width="0.93" height="1.35" fill="#1212ff" opacity="0.90"/><rect x="1.75" y="10.53" width="0.93" height="1.35" fill="#1212ff" opacity="0.87"/><rect x="2.62" y="10.53" width="0.93" height="1.35" fill="#1212ff" opacity="0.71"/><rect x="3.50" y="10.53" width="0.93" height="1.35" fill="#1212ff" opacity="0.95"/><rect x="4.38" y="10.53" width="0.93" height="1.35" fill="#1212ff" opacity="0.49"/><rect x="5.25" y="10.53" width="0.93" height="1.35" fill="#1212ff" opacity="0.54"/><rect x="6.12" y="10.53" width="0.93" height="1.35" fill="#1212ff" opacity="0.94"/><rect x="7.00" y="10.53" width="0.93" height="1.35" fill="#1212ff" opacity="0.30"/><rect x="7.88" y="10.53" width="0.93" height="1.35" fill="#1212ff" opacity="0.58"/><rect x="8.75" y="10.53" width="0.93" height="1.35" fill="#1212ff" opacity="0.80"/><rect x="9.62" y="10.53" width="0.93" height="1.35" fill="#1212ff" opacity="0.33"/><rect x="10.50" y="10.53" width="0.93" height="1.35" fill="#1212ff" opacity="0.42"/><rect x="11.38" y="10.53" width="0.93" height="1.35" fill="#1212ff" opacity="0.76"/><rect x="12.25" y="10.53" width="0.93" height="1.35" fill="#1212ff" opacity="0.88"/><rect x="13.12" y="10.53" width="0.93" height="1.35" fill="#1212ff" opacity="0.37"/><rect x="14.00" y="10.53" width="0.93" height="1.35" fill="#1212ff" opacity="0.51"/><rect x="14.88" y="10.53" width="0.93" height="1.35" fill="#ff1010" opacity="0.30"/><rect x="15.75" y="10.53" width="0.93" height="1.35" fill="#1212ff" opacity="0.61"/><rect x="16.62" y="10.53" width="0.93" height="1.35" fill="#1212ff" opacity="0.90"/><rect x="17.50" y="10.53" width="0.93" height="1.35" fill="#1212ff" opacity="0.87"/><rect x="18.38" y="10.53" width="0.93" height="1.35" fill="#1212ff" opacity="0.70"/><rect x="19.25" y="10.53" width="0.93" height="1.35" fill="#1212ff" opacity="0.48"/><rect x="20.12" y="10.53" width="0.93" height="1.35" fill="#1212ff" opacity="0.87"/><rect x="21.00" y="10.53" width="0.93" height="1.35" fill="#1212ff" opacity="0.66"/><rect x="21.88" y="10.53" width="0.93" height="1.35" fill="#1212ff" opacity="0.23"/><rect x="22.75" y="10.53" width="0.93" height="1.35" fill="#1212ff" opacity="0.61"/><rect x="23.62" y="10.53" width="0.93" height="1.35" fill="#ff1010" opacity="0.55"/><rect x="24.50" y="10.53" width="0.93" height="1.35" fill="#ff1010" opacity="0.55"/><rect x="25.38" y="10.53" width="0.93" height="1.35" fill="#ff1010" opacity="0.30"/><rect x="0.00" y="14.04" width="0.93" height="1.35" fill="#1212ff" opacity="0.77"/><rect x="0.88" y="14.04" width="0.93" height="1.35" fill="#1212ff" opacity="0.71"/><rect x="1.75" y="14.04" width="0.93" height="1.35" fill="#1212ff" opacity="0.36"/><rect x="2.62" y="14.04" width="0.93" height="1.35" fill="#1212ff" opacity="0.32"/><rect x="3.50" y="14.04" width="0.93" height="1.35" fill="#1212ff" opacity="0.62"/><rect x="4.38" y="14.04" width="0.93" height="1.35" fill="#1212ff" opacity="0.50"/><rect x="5.25" y="14.04" width="0.93" height="1.35" fill="#1212ff" opacity="0.37"/><rect x="6.12" y="14.04" width="0.93" height="1.35" fill="#1212ff" opacity="0.54"/><rect x="7.00" y="14.04" width="0.93" height="1.35" fill="#1212ff" opacity="0.68"/><rect x="7.88" y="14.04" width="0.93" height="1.35" fill="#1212ff" opacity="0.78"/><rect x="8.75" y="14.04" width="0.93" height="1.35" fill="#1212ff" opacity="0.35"/><rect x="9.62" y="14.04" width="0.93" height="1.35" fill="#1212ff" opacity="0.69"/><rect x="10.50" y="14.04" width="0.93" height="1.35" fill="#1212ff" opacity="0.56"/><rect x="11.38" y="14.04" width="0.93" height="1.35" fill="#1212ff" opacity="0.88"/><rect x="12.25" y="14.04" width="0.93" height="1.35" fill="#1212ff" opacity="0.52"/><rect x="13.12" y="14.04" width="0.93" height="1.35" fill="#1212ff" opacity="0.72"/><rect x="14.00" y="14.04" width="0.93" height="1.35" fill="#1212ff" opacity="0.49"/><rect x="14.88" y="14.04" width="0.93" height="1.35" fill="#1212ff" opacity="0.86"/><rect x="16.62" y="14.04" width="0.93" height="1.35" fill="#ff1010" opacity="0.55"/><rect x="18.38" y="14.04" width="0.93" height="1.35" fill="#1212ff" opacity="0.30"/><rect x="19.25" y="14.04" width="0.93" height="1.35" fill="#1212ff" opacity="0.42"/><rect x="20.12" y="14.04" width="0.93" height="1.35" fill="#1212ff" opacity="0.95"/><rect x="21.00" y="14.04" width="0.93" height="1.35" fill="#1212ff" opacity="0.43"/><rect x="21.88" y="14.04" width="0.93" height="1.35" fill="#1212ff" opacity="0.88"/><rect x="22.75" y="14.04" width="0.93" height="1.35" fill="#1212ff" opacity="0.93"/><rect x="23.62" y="14.04" width="0.93" height="1.35" fill="#1212ff" opacity="0.75"/><rect x="24.50" y="14.04" width="0.93" height="1.35" fill="#1212ff" opacity="0.43"/><rect x="25.38" y="14.04" width="0.93" height="1.35" fill="#1212ff" opacity="0.72"/><rect x="26.25" y="14.04" width="0.93" height="1.35" fill="#1212ff" opacity="0.78"/><rect x="27.12" y="14.04" width="0.93" height="1.35" fill="#1212ff" opacity="0.27"/><rect x="28.00" y="14.04" width="0.93" height="1.35" fill="#1212ff" opacity="0.53"/><rect x="28.88" y="14.04" width="0.93" height="1.35" fill="#1212ff" opacity="0.95"/><rect x="29.75" y="14.04" width="0.93" height="1.35" fill="#1212ff" opacity="0.33"/><rect x="30.62" y="14.04" width="0.93" height="1.35" fill="#1212ff" opacity="0.36"/><rect x="31.50" y="14.04" width="0.93" height="1.35" fill="#1212ff" opacity="0.69"/><rect x="32.38" y="14.04" width="0.93" height="1.35" fill="#1212ff" opacity="0.42"/><rect x="33.25" y="14.04" width="0.93" height="1.35" fill="#ff1010" opacity="0.30"/><rect x="34.12" y="14.04" width="0.93" height="1.35" fill="#1212ff" opacity="0.77"/><rect x="35.00" y="14.04" width="0.93" height="1.35" fill="#1212ff" opacity="0.71"/><rect x="35.88" y="14.04" width="0.93" height="1.35" fill="#1212ff" opacity="0.36"/><rect x="36.75" y="14.04" width="0.93" height="1.35" fill="#1212ff" opacity="0.32"/><rect x="37.62" y="14.04" width="0.93" height="1.35" fill="#1212ff" opacity="0.62"/><rect x="38.50" y="14.04" width="0.93" height="1.35" fill="#1212ff" opacity="0.50"/><rect x="39.38" y="14.04" width="0.93" height="1.35" fill="#1212ff" opacity="0.37"/><rect x="40.25" y="14.04" width="0.93" height="1.35" fill="#1212ff" opacity="0.54"/><rect x="41.12" y="14.04" width="0.93" height="1.35" fill="#1212ff" opacity="0.68"/><rect x="42.00" y="14.04" width="0.93" height="1.35" fill="#1212ff" opacity="0.78"/><rect x="42.88" y="14.04" width="0.93" height="1.35" fill="#ff1010" opacity="0.55"/><rect x="43.75" y="14.04" width="0.93" height="1.35" fill="#ff1010" opacity="0.55"/><rect x="44.62" y="14.04" width="0.93" height="1.35" fill="#ff1010" opacity="0.30"/><rect x="0.00" y="15.80" width="0.93" height="1.35" fill="#ff1010" opacity="0.28"/><rect x="0.88" y="15.80" width="0.93" height="1.35" fill="#ff1010" opacity="0.26"/><rect x="1.75" y="15.80" width="0.93" height="1.35" fill="#ff1010" opacity="0.86"/><rect x="2.62" y="15.80" width="0.93" height="1.35" fill="#ff1010" opacity="0.36"/><rect x="4.38" y="15.80" width="0.93" height="1.35" fill="#ff1010" opacity="0.67"/><rect x="5.25" y="15.80" width="0.93" height="1.35" fill="#ff1010" opacity="0.75"/><rect x="7.00" y="15.80" width="0.93" height="1.35" fill="#ff1010" opacity="0.55"/><rect x="7.88" y="15.80" width="0.93" height="1.35" fill="#1212ff" opacity="0.54"/><rect x="8.75" y="15.80" width="0.93" height="1.35" fill="#1212ff" opacity="0.95"/><rect x="9.62" y="15.80" width="0.93" height="1.35" fill="#1212ff" opacity="0.86"/><rect x="10.50" y="15.80" width="0.93" height="1.35" fill="#1212ff" opacity="0.36"/><rect x="11.38" y="15.80" width="0.93" height="1.35" fill="#1212ff" opacity="0.76"/><rect x="12.25" y="15.80" width="0.93" height="1.35" fill="#1212ff" opacity="0.35"/><rect x="13.12" y="15.80" width="0.93" height="1.35" fill="#1212ff" opacity="0.60"/><rect x="14.00" y="15.80" width="0.93" height="1.35" fill="#1212ff" opacity="0.45"/><rect x="14.88" y="15.80" width="0.93" height="1.35" fill="#1212ff" opacity="0.59"/><rect x="15.75" y="15.80" width="0.93" height="1.35" fill="#1212ff" opacity="0.25"/><rect x="16.62" y="15.80" width="0.93" height="1.35" fill="#1212ff" opacity="0.45"/><rect x="17.50" y="15.80" width="0.93" height="1.35" fill="#1212ff" opacity="0.25"/><rect x="18.38" y="15.80" width="0.93" height="1.35" fill="#1212ff" opacity="0.56"/><rect x="19.25" y="15.80" width="0.93" height="1.35" fill="#1212ff" opacity="0.26"/><rect x="20.12" y="15.80" width="0.93" height="1.35" fill="#1212ff" opacity="0.73"/><rect x="21.00" y="15.80" width="0.93" height="1.35" fill="#1212ff" opacity="0.27"/><rect x="21.88" y="15.80" width="0.93" height="1.35" fill="#1212ff" opacity="0.68"/><rect x="22.75" y="15.80" width="0.93" height="1.35" fill="#1212ff" opacity="0.87"/><rect x="24.50" y="15.80" width="0.93" height="1.35" fill="#ff1010" opacity="0.55"/><rect x="26.25" y="15.80" width="0.93" height="1.35" fill="#101010" opacity="0.25"/><rect x="27.12" y="15.80" width="0.93" height="1.35" fill="#ff1010" opacity="0.55"/><rect x="28.88" y="15.80" width="0.93" height="1.35" fill="#ff1010" opacity="0.85"/><rect x="29.75" y="15.80" width="0.93" height="1.35" fill="#ff1010" opacity="0.95"/><rect x="30.62" y="15.80" width="0.93" height="1.35" fill="#ff1010" opacity="0.92"/><rect x="31.50" y="15.80" width="0.93" height="1.35" fill="#ff1010" opacity="0.75"/><rect x="32.38" y="15.80" width="0.93" height="1.35" fill="#ff1010" opacity="0.89"/><rect x="3.50" y="19.30" width="0.93" height="1.35" fill="#0c880c" opacity="0.55"/><rect x="4.38" y="19.30" width="0.93" height="1.35" fill="#0c880c" opacity="0.55"/><rect x="6.12" y="19.30" width="0.93" height="1.35" fill="#0c880c" opacity="0.93"/><rect x="7.00" y="19.30" width="0.93" height="1.35" fill="#0c880c" opacity="0.83"/><rect x="7.88" y="19.30" width="0.93" height="1.35" fill="#0c880c" opacity="0.83"/><rect x="8.75" y="19.30" width="0.93" height="1.35" fill="#0c880c" opacity="0.83"/><rect x="9.62" y="19.30" width="0.93" height="1.35" fill="#0c880c" opacity="0.95"/><rect x="10.50" y="19.30" width="0.93" height="1.35" fill="#0c880c" opacity="0.76"/><rect x="11.38" y="19.30" width="0.93" height="1.35" fill="#0c880c" opacity="0.65"/><rect x="12.25" y="19.30" width="0.93" height="1.35" fill="#0c880c" opacity="0.30"/><rect x="13.12" y="19.30" width="0.93" height="1.35" fill="#0c880c" opacity="0.31"/><rect x="14.00" y="19.30" width="0.93" height="1.35" fill="#0c880c" opacity="0.86"/><rect x="15.75" y="19.30" width="0.93" height="1.35" fill="#0c880c" opacity="0.38"/><rect x="16.62" y="19.30" width="0.93" height="1.35" fill="#0c880c" opacity="0.83"/><rect x="17.50" y="19.30" width="0.93" height="1.35" fill="#0c880c" opacity="0.40"/><rect x="18.38" y="19.30" width="0.93" height="1.35" fill="#0c880c" opacity="0.68"/><rect x="19.25" y="19.30" width="0.93" height="1.35" fill="#0c880c" opacity="0.46"/><rect x="20.12" y="19.30" width="0.93" height="1.35" fill="#0c880c" opacity="0.78"/><rect x="21.00" y="19.30" width="0.93" height="1.35" fill="#0c880c" opacity="0.78"/><rect x="22.75" y="19.30" width="0.93" height="1.35" fill="#0c880c" opacity="0.78"/><rect x="23.62" y="19.30" width="0.93" height="1.35" fill="#0c880c" opacity="0.91"/><rect x="24.50" y="19.30" width="0.93" height="1.35" fill="#0c880c" opacity="0.46"/><rect x="25.38" y="19.30" width="0.93" height="1.35" fill="#0c880c" opacity="0.46"/><rect x="26.25" y="19.30" width="0.93" height="1.35" fill="#0c880c" opacity="0.94"/><rect x="27.12" y="19.30" width="0.93" height="1.35" fill="#0c880c" opacity="0.41"/><rect x="28.00" y="19.30" width="0.93" height="1.35" fill="#0c880c" opacity="0.76"/><rect x="28.88" y="19.30" width="0.93" height="1.35" fill="#0c880c" opacity="0.68"/><rect x="29.75" y="19.30" width="0.93" height="1.35" fill="#0c880c" opacity="0.41"/><rect x="30.62" y="19.30" width="0.93" height="1.35" fill="#0c880c" opacity="0.51"/><rect x="32.38" y="19.30" width="0.93" height="1.35" fill="#0c880c" opacity="0.66"/><rect x="33.25" y="19.30" width="0.93" height="1.35" fill="#0c880c" opacity="0.83"/><rect x="34.12" y="19.30" width="0.93" height="1.35" fill="#0c880c" opacity="0.81"/><rect x="35.00" y="19.30" width="0.93" height="1.35" fill="#0c880c" opacity="0.64"/><rect x="35.88" y="19.30" width="0.93" height="1.35" fill="#0c880c" opacity="0.74"/><rect x="36.75" y="19.30" width="0.93" height="1.35" fill="#0c880c" opacity="0.73"/><rect x="37.62" y="19.30" width="0.93" height="1.35" fill="#0c880c" opacity="0.94"/><rect x="38.50" y="19.30" width="0.93" height="1.35" fill="#0c880c" opacity="0.56"/><rect x="40.25" y="19.30" width="0.93" height="1.35" fill="#0c880c" opacity="0.48"/><rect x="41.12" y="19.30" width="0.93" height="1.35" fill="#0c880c" opacity="0.54"/><rect x="42.88" y="19.30" width="0.93" height="1.35" fill="#0c880c" opacity="0.29"/><rect x="43.75" y="19.30" width="0.93" height="1.35" fill="#0c880c" opacity="0.66"/><rect x="44.62" y="19.30" width="0.93" height="1.35" fill="#0c880c" opacity="0.90"/><rect x="45.50" y="19.30" width="0.93" height="1.35" fill="#0c880c" opacity="0.91"/><rect x="46.38" y="19.30" width="0.93" height="1.35" fill="#0c880c" opacity="0.69"/><rect x="47.25" y="19.30" width="0.93" height="1.35" fill="#0c880c" opacity="0.46"/><rect x="49.00" y="19.30" width="0.93" height="1.35" fill="#0c880c" opacity="0.87"/><rect x="49.88" y="19.30" width="0.93" height="1.35" fill="#0c880c" opacity="0.83"/><rect x="50.75" y="19.30" width="0.93" height="1.35" fill="#0c880c" opacity="0.64"/><rect x="51.62" y="19.30" width="0.93" height="1.35" fill="#0c880c" opacity="0.26"/><rect x="52.50" y="19.30" width="0.93" height="1.35" fill="#0c880c" opacity="0.51"/><rect x="53.38" y="19.30" width="0.93" height="1.35" fill="#0c880c" opacity="0.83"/><rect x="54.25" y="19.30" width="0.93" height="1.35" fill="#0c880c" opacity="0.94"/><rect x="55.12" y="19.30" width="0.93" height="1.35" fill="#0c880c" opacity="0.95"/><rect x="3.50" y="21.06" width="0.93" height="1.35" fill="#1212ff" opacity="0.76"/><rect x="4.38" y="21.06" width="0.93" height="1.35" fill="#1212ff" opacity="0.50"/><rect x="5.25" y="21.06" width="0.93" height="1.35" fill="#1212ff" opacity="0.75"/><rect x="6.12" y="21.06" width="0.93" height="1.35" fill="#1212ff" opacity="0.83"/><rect x="7.00" y="21.06" width="0.93" height="1.35" fill="#1212ff" opacity="0.31"/><rect x="7.88" y="21.06" width="0.93" height="1.35" fill="#1212ff" opacity="0.86"/><rect x="8.75" y="21.06" width="0.93" height="1.35" fill="#1212ff" opacity="0.68"/><rect x="9.62" y="21.06" width="0.93" height="1.35" fill="#1212ff" opacity="0.86"/><rect x="10.50" y="21.06" width="0.93" height="1.35" fill="#1212ff" opacity="0.76"/><rect x="11.38" y="21.06" width="0.93" height="1.35" fill="#1212ff" opacity="0.37"/><rect x="12.25" y="21.06" width="0.93" height="1.35" fill="#1212ff" opacity="0.82"/><rect x="13.12" y="21.06" width="0.93" height="1.35" fill="#1212ff" opacity="0.34"/><rect x="14.00" y="21.06" width="0.93" height="1.35" fill="#1212ff" opacity="0.43"/><rect x="14.88" y="21.06" width="0.93" height="1.35" fill="#1212ff" opacity="0.68"/><rect x="15.75" y="21.06" width="0.93" height="1.35" fill="#1212ff" opacity="0.64"/><rect x="16.62" y="21.06" width="0.93" height="1.35" fill="#1212ff" opacity="0.71"/><rect x="17.50" y="21.06" width="0.93" height="1.35" fill="#1212ff" opacity="0.46"/><rect x="18.38" y="21.06" width="0.93" height="1.35" fill="#1212ff" opacity="0.93"/><rect x="19.25" y="21.06" width="0.93" height="1.35" fill="#1212ff" opacity="0.25"/><rect x="20.12" y="21.06" width="0.93" height="1.35" fill="#1212ff" opacity="0.56"/><rect x="21.00" y="21.06" width="0.93" height="1.35" fill="#1212ff" opacity="0.88"/><rect x="21.88" y="21.06" width="0.93" height="1.35" fill="#1212ff" opacity="0.41"/><rect x="22.75" y="21.06" width="0.93" height="1.35" fill="#1212ff" opacity="0.78"/><rect x="23.62" y="21.06" width="0.93" height="1.35" fill="#1212ff" opacity="0.63"/><rect x="24.50" y="21.06" width="0.93" height="1.35" fill="#1212ff" opacity="0.36"/><rect x="26.25" y="21.06" width="0.93" height="1.35" fill="#ff1010" opacity="0.55"/><rect x="28.00" y="21.06" width="0.93" height="1.35" fill="#1212ff" opacity="0.24"/><rect x="28.88" y="21.06" width="0.93" height="1.35" fill="#1212ff" opacity="0.25"/><rect x="29.75" y="21.06" width="0.93" height="1.35" fill="#1212ff" opacity="0.30"/><rect x="30.62" y="21.06" width="0.93" height="1.35" fill="#1212ff" opacity="0.63"/><rect x="31.50" y="21.06" width="0.93" height="1.35" fill="#1212ff" opacity="0.22"/><rect x="32.38" y="21.06" width="0.93" height="1.35" fill="#1212ff" opacity="0.48"/><rect x="33.25" y="21.06" width="0.93" height="1.35" fill="#1212ff" opacity="0.27"/><rect x="34.12" y="21.06" width="0.93" height="1.35" fill="#1212ff" opacity="0.96"/><rect x="35.00" y="21.06" width="0.93" height="1.35" fill="#1212ff" opacity="0.88"/><rect x="35.88" y="21.06" width="0.93" height="1.35" fill="#1212ff" opacity="0.56"/><rect x="36.75" y="21.06" width="0.93" height="1.35" fill="#1212ff" opacity="0.38"/><rect x="37.62" y="21.06" width="0.93" height="1.35" fill="#1212ff" opacity="0.25"/><rect x="38.50" y="21.06" width="0.93" height="1.35" fill="#1212ff" opacity="0.63"/><rect x="39.38" y="21.06" width="0.93" height="1.35" fill="#1212ff" opacity="0.68"/><rect x="40.25" y="21.06" width="0.93" height="1.35" fill="#1212ff" opacity="0.79"/><rect x="41.12" y="21.06" width="0.93" height="1.35" fill="#1212ff" opacity="0.71"/><rect x="42.00" y="21.06" width="0.93" height="1.35" fill="#1212ff" opacity="0.71"/><rect x="42.88" y="21.06" width="0.93" height="1.35" fill="#ff1010" opacity="0.55"/><rect x="43.75" y="21.06" width="0.93" height="1.35" fill="#101010" opacity="0.84"/><rect x="44.62" y="21.06" width="0.93" height="1.35" fill="#ff1010" opacity="0.55"/><rect x="45.50" y="21.06" width="0.93" height="1.35" fill="#ff1010" opacity="0.30"/><rect x="46.38" y="21.06" width="0.93" height="1.35" fill="#1212ff" opacity="0.23"/><rect x="47.25" y="21.06" width="0.93" height="1.35" fill="#1212ff" opacity="0.46"/><rect x="48.12" y="21.06" width="0.93" height="1.35" fill="#1212ff" opacity="0.83"/><rect x="49.00" y="21.06" width="0.93" height="1.35" fill="#1212ff" opacity="0.43"/><rect x="49.88" y="21.06" width="0.93" height="1.35" fill="#1212ff" opacity="0.68"/><rect x="50.75" y="21.06" width="0.93" height="1.35" fill="#1212ff" opacity="0.79"/><rect x="51.62" y="21.06" width="0.93" height="1.35" fill="#1212ff" opacity="0.25"/><rect x="52.50" y="21.06" width="0.93" height="1.35" fill="#1212ff" opacity="0.30"/><rect x="53.38" y="21.06" width="0.93" height="1.35" fill="#1212ff" opacity="0.63"/><rect x="54.25" y="21.06" width="0.93" height="1.35" fill="#1212ff" opacity="0.83"/><rect x="55.12" y="21.06" width="0.93" height="1.35" fill="#ff1010" opacity="0.30"/><rect x="3.50" y="24.57" width="0.93" height="1.35" fill="#0c880c" opacity="0.55"/><rect x="4.38" y="24.57" width="0.93" height="1.35" fill="#0c880c" opacity="0.55"/><rect x="6.12" y="24.57" width="0.93" height="1.35" fill="#0c880c" opacity="0.36"/><rect x="7.00" y="24.57" width="0.93" height="1.35" fill="#0c880c" opacity="0.38"/><rect x="7.88" y="24.57" width="0.93" height="1.35" fill="#0c880c" opacity="0.28"/><rect x="8.75" y="24.57" width="0.93" height="1.35" fill="#0c880c" opacity="0.92"/><rect x="9.62" y="24.57" width="0.93" height="1.35" fill="#0c880c" opacity="0.57"/><rect x="10.50" y="24.57" width="0.93" height="1.35" fill="#0c880c" opacity="0.50"/><rect x="11.38" y="24.57" width="0.93" height="1.35" fill="#0c880c" opacity="0.70"/><rect x="12.25" y="24.57" width="0.93" height="1.35" fill="#0c880c" opacity="0.92"/><rect x="13.12" y="24.57" width="0.93" height="1.35" fill="#0c880c" opacity="0.28"/><rect x="14.00" y="24.57" width="0.93" height="1.35" fill="#0c880c" opacity="0.83"/><rect x="14.88" y="24.57" width="0.93" height="1.35" fill="#0c880c" opacity="0.72"/><rect x="16.62" y="24.57" width="0.93" height="1.35" fill="#0c880c" opacity="0.60"/><rect x="17.50" y="24.57" width="0.93" height="1.35" fill="#0c880c" opacity="0.26"/><rect x="18.38" y="24.57" width="0.93" height="1.35" fill="#0c880c" opacity="0.94"/><rect x="19.25" y="24.57" width="0.93" height="1.35" fill="#0c880c" opacity="0.43"/><rect x="20.12" y="24.57" width="0.93" height="1.35" fill="#0c880c" opacity="0.96"/><rect x="21.00" y="24.57" width="0.93" height="1.35" fill="#0c880c" opacity="0.39"/><rect x="21.88" y="24.57" width="0.93" height="1.35" fill="#0c880c" opacity="0.55"/><rect x="23.62" y="24.57" width="0.93" height="1.35" fill="#0c880c" opacity="0.65"/><rect x="24.50" y="24.57" width="0.93" height="1.35" fill="#0c880c" opacity="0.38"/><rect x="25.38" y="24.57" width="0.93" height="1.35" fill="#0c880c" opacity="0.89"/><rect x="26.25" y="24.57" width="0.93" height="1.35" fill="#0c880c" opacity="0.84"/><rect x="27.12" y="24.57" width="0.93" height="1.35" fill="#0c880c" opacity="0.69"/><rect x="28.00" y="24.57" width="0.93" height="1.35" fill="#0c880c" opacity="0.68"/><rect x="28.88" y="24.57" width="0.93" height="1.35" fill="#0c880c" opacity="0.56"/><rect x="29.75" y="24.57" width="0.93" height="1.35" fill="#0c880c" opacity="0.75"/><rect x="30.62" y="24.57" width="0.93" height="1.35" fill="#0c880c" opacity="0.35"/><rect x="31.50" y="24.57" width="0.93" height="1.35" fill="#0c880c" opacity="0.59"/><rect x="33.25" y="24.57" width="0.93" height="1.35" fill="#0c880c" opacity="0.68"/><rect x="34.12" y="24.57" width="0.93" height="1.35" fill="#0c880c" opacity="0.43"/><rect x="35.00" y="24.57" width="0.93" height="1.35" fill="#0c880c" opacity="0.94"/><rect x="35.88" y="24.57" width="0.93" height="1.35" fill="#0c880c" opacity="0.66"/><rect x="36.75" y="24.57" width="0.93" height="1.35" fill="#0c880c" opacity="0.86"/><rect x="37.62" y="24.57" width="0.93" height="1.35" fill="#0c880c" opacity="0.32"/><rect x="38.50" y="24.57" width="0.93" height="1.35" fill="#0c880c" opacity="0.54"/><rect x="39.38" y="24.57" width="0.93" height="1.35" fill="#0c880c" opacity="0.24"/><rect x="3.50" y="26.33" width="0.93" height="1.35" fill="#1212ff" opacity="0.85"/><rect x="4.38" y="26.33" width="0.93" height="1.35" fill="#1212ff" opacity="0.83"/><rect x="5.25" y="26.33" width="0.93" height="1.35" fill="#1212ff" opacity="0.78"/><rect x="6.12" y="26.33" width="0.93" height="1.35" fill="#1212ff" opacity="0.56"/><rect x="7.00" y="26.33" width="0.93" height="1.35" fill="#1212ff" opacity="0.86"/><rect x="7.88" y="26.33" width="0.93" height="1.35" fill="#1212ff" opacity="0.28"/><rect x="8.75" y="26.33" width="0.93" height="1.35" fill="#1212ff" opacity="0.50"/><rect x="9.62" y="26.33" width="0.93" height="1.35" fill="#1212ff" opacity="0.82"/><rect x="10.50" y="26.33" width="0.93" height="1.35" fill="#1212ff" opacity="0.80"/><rect x="11.38" y="26.33" width="0.93" height="1.35" fill="#1212ff" opacity="0.49"/><rect x="12.25" y="26.33" width="0.93" height="1.35" fill="#1212ff" opacity="0.86"/><rect x="13.12" y="26.33" width="0.93" height="1.35" fill="#1212ff" opacity="0.33"/><rect x="14.00" y="26.33" width="0.93" height="1.35" fill="#1212ff" opacity="0.72"/><rect x="14.88" y="26.33" width="0.93" height="1.35" fill="#1212ff" opacity="0.70"/><rect x="15.75" y="26.33" width="0.93" height="1.35" fill="#1212ff" opacity="0.71"/><rect x="16.62" y="26.33" width="0.93" height="1.35" fill="#1212ff" opacity="0.74"/><rect x="17.50" y="26.33" width="0.93" height="1.35" fill="#1212ff" opacity="0.61"/><rect x="18.38" y="26.33" width="0.93" height="1.35" fill="#ff1010" opacity="0.30"/><rect x="19.25" y="26.33" width="0.93" height="1.35" fill="#1212ff" opacity="0.88"/><rect x="20.12" y="26.33" width="0.93" height="1.35" fill="#1212ff" opacity="0.59"/><rect x="21.00" y="26.33" width="0.93" height="1.35" fill="#1212ff" opacity="0.56"/><rect x="21.88" y="26.33" width="0.93" height="1.35" fill="#1212ff" opacity="0.37"/><rect x="22.75" y="26.33" width="0.93" height="1.35" fill="#1212ff" opacity="0.43"/><rect x="23.62" y="26.33" width="0.93" height="1.35" fill="#1212ff" opacity="0.56"/><rect x="24.50" y="26.33" width="0.93" height="1.35" fill="#1212ff" opacity="0.88"/><rect x="25.38" y="26.33" width="0.93" height="1.35" fill="#1212ff" opacity="0.82"/><rect x="26.25" y="26.33" width="0.93" height="1.35" fill="#1212ff" opacity="0.69"/><rect x="27.12" y="26.33" width="0.93" height="1.35" fill="#1212ff" opacity="0.66"/><rect x="28.00" y="26.33" width="0.93" height="1.35" fill="#1212ff" opacity="0.70"/><rect x="28.88" y="26.33" width="0.93" height="1.35" fill="#1212ff" opacity="0.87"/><rect x="29.75" y="26.33" width="0.93" height="1.35" fill="#1212ff" opacity="0.71"/><rect x="30.62" y="26.33" width="0.93" height="1.35" fill="#1212ff" opacity="0.34"/><rect x="31.50" y="26.33" width="0.93" height="1.35" fill="#1212ff" opacity="0.80"/><rect x="32.38" y="26.33" width="0.93" height="1.35" fill="#1212ff" opacity="0.72"/><rect x="33.25" y="26.33" width="0.93" height="1.35" fill="#1212ff" opacity="0.56"/><rect x="34.12" y="26.33" width="0.93" height="1.35" fill="#1212ff" opacity="0.66"/><rect x="35.00" y="26.33" width="0.93" height="1.35" fill="#1212ff" opacity="0.45"/><rect x="35.88" y="26.33" width="0.93" height="1.35" fill="#1212ff" opacity="0.96"/><rect x="36.75" y="26.33" width="0.93" height="1.35" fill="#ff1010" opacity="0.55"/><rect x="37.62" y="26.33" width="0.93" height="1.35" fill="#ff1010" opacity="0.42"/><rect x="38.50" y="26.33" width="0.93" height="1.35" fill="#ff1010" opacity="0.88"/><rect x="40.25" y="26.33" width="0.93" height="1.35" fill="#1212ff" opacity="0.57"/><rect x="41.12" y="26.33" width="0.93" height="1.35" fill="#1212ff" opacity="0.94"/><rect x="42.00" y="26.33" width="0.93" height="1.35" fill="#1212ff" opacity="0.50"/><rect x="42.88" y="26.33" width="0.93" height="1.35" fill="#1212ff" opacity="0.63"/><rect x="43.75" y="26.33" width="0.93" height="1.35" fill="#1212ff" opacity="0.49"/><rect x="44.62" y="26.33" width="0.93" height="1.35" fill="#1212ff" opacity="0.66"/><rect x="45.50" y="26.33" width="0.93" height="1.35" fill="#1212ff" opacity="0.30"/><rect x="46.38" y="26.33" width="0.93" height="1.35" fill="#1212ff" opacity="0.45"/><rect x="47.25" y="26.33" width="0.93" height="1.35" fill="#1212ff" opacity="0.68"/><rect x="48.12" y="26.33" width="0.93" height="1.35" fill="#1212ff" opacity="0.47"/><rect x="49.00" y="26.33" width="0.93" height="1.35" fill="#1212ff" opacity="0.36"/><rect x="49.88" y="26.33" width="0.93" height="1.35" fill="#1212ff" opacity="0.39"/><rect x="50.75" y="26.33" width="0.93" height="1.35" fill="#1212ff" opacity="0.90"/><rect x="51.62" y="26.33" width="0.93" height="1.35" fill="#1212ff" opacity="0.33"/><rect x="52.50" y="26.33" width="0.93" height="1.35" fill="#1212ff" opacity="0.90"/><rect x="53.38" y="26.33" width="0.93" height="1.35" fill="#1212ff" opacity="0.74"/><rect x="54.25" y="26.33" width="0.93" height="1.35" fill="#1212ff" opacity="0.54"/><rect x="55.12" y="26.33" width="0.93" height="1.35" fill="#1212ff" opacity="0.41"/><rect x="56.00" y="26.33" width="0.93" height="1.35" fill="#1212ff" opacity="0.64"/><rect x="56.88" y="26.33" width="0.93" height="1.35" fill="#1212ff" opacity="0.66"/><rect x="57.75" y="26.33" width="0.93" height="1.35" fill="#1212ff" opacity="0.54"/><rect x="58.62" y="26.33" width="0.93" height="1.35" fill="#1212ff" opacity="0.61"/><rect x="59.50" y="26.33" width="0.93" height="1.35" fill="#1212ff" opacity="0.85"/><rect x="60.38" y="26.33" width="0.93" height="1.35" fill="#1212ff" opacity="0.59"/><rect x="61.25" y="26.33" width="0.93" height="1.35" fill="#1212ff" opacity="0.86"/><rect x="62.12" y="26.33" width="0.93" height="1.35" fill="#ff1010" opacity="0.55"/><rect x="63.00" y="26.33" width="0.93" height="1.35" fill="#ff1010" opacity="0.30"/><rect x="3.50" y="28.08" width="0.93" height="1.35" fill="#1212ff" opacity="0.96"/><rect x="4.38" y="28.08" width="0.93" height="1.35" fill="#1212ff" opacity="0.79"/><rect x="5.25" y="28.08" width="0.93" height="1.35" fill="#1212ff" opacity="0.25"/><rect x="6.12" y="28.08" width="0.93" height="1.35" fill="#1212ff" opacity="0.28"/><rect x="7.00" y="28.08" width="0.93" height="1.35" fill="#1212ff" opacity="0.56"/><rect x="7.88" y="28.08" width="0.93" height="1.35" fill="#1212ff" opacity="0.30"/><rect x="8.75" y="28.08" width="0.93" height="1.35" fill="#1212ff" opacity="0.38"/><rect x="9.62" y="28.08" width="0.93" height="1.35" fill="#1212ff" opacity="0.70"/><rect x="10.50" y="28.08" width="0.93" height="1.35" fill="#1212ff" opacity="0.37"/><rect x="11.38" y="28.08" width="0.93" height="1.35" fill="#1212ff" opacity="0.68"/><rect x="12.25" y="28.08" width="0.93" height="1.35" fill="#1212ff" opacity="0.87"/><rect x="13.12" y="28.08" width="0.93" height="1.35" fill="#1212ff" opacity="0.58"/><rect x="14.00" y="28.08" width="0.93" height="1.35" fill="#1212ff" opacity="0.27"/><rect x="14.88" y="28.08" width="0.93" height="1.35" fill="#1212ff" opacity="0.38"/><rect x="15.75" y="28.08" width="0.93" height="1.35" fill="#1212ff" opacity="0.72"/><rect x="16.62" y="28.08" width="0.93" height="1.35" fill="#1212ff" opacity="0.34"/><rect x="17.50" y="28.08" width="0.93" height="1.35" fill="#1212ff" opacity="0.89"/><rect x="18.38" y="28.08" width="0.93" height="1.35" fill="#ff1010" opacity="0.30"/><rect x="19.25" y="28.08" width="0.93" height="1.35" fill="#1212ff" opacity="0.78"/><rect x="20.12" y="28.08" width="0.93" height="1.35" fill="#1212ff" opacity="0.86"/><rect x="21.00" y="28.08" width="0.93" height="1.35" fill="#1212ff" opacity="0.93"/><rect x="21.88" y="28.08" width="0.93" height="1.35" fill="#1212ff" opacity="0.96"/><rect x="22.75" y="28.08" width="0.93" height="1.35" fill="#1212ff" opacity="0.36"/><rect x="23.62" y="28.08" width="0.93" height="1.35" fill="#1212ff" opacity="0.41"/><rect x="24.50" y="28.08" width="0.93" height="1.35" fill="#1212ff" opacity="0.50"/><rect x="25.38" y="28.08" width="0.93" height="1.35" fill="#1212ff" opacity="0.36"/><rect x="26.25" y="28.08" width="0.93" height="1.35" fill="#ff1010" opacity="0.55"/><rect x="27.12" y="28.08" width="0.93" height="1.35" fill="#ff1010" opacity="0.55"/><rect x="28.00" y="28.08" width="0.93" height="1.35" fill="#ff1010" opacity="0.30"/><rect x="0.00" y="31.59" width="0.93" height="1.35" fill="#ff1010" opacity="0.49"/><rect x="0.88" y="31.59" width="0.93" height="1.35" fill="#ff1010" opacity="0.86"/><rect x="1.75" y="31.59" width="0.93" height="1.35" fill="#ff1010" opacity="0.88"/><rect x="2.62" y="31.59" width="0.93" height="1.35" fill="#ff1010" opacity="0.33"/><rect x="3.50" y="31.59" width="0.93" height="1.35" fill="#ff1010" opacity="0.58"/><rect x="4.38" y="31.59" width="0.93" height="1.35" fill="#ff1010" opacity="0.83"/><rect x="5.25" y="31.59" width="0.93" height="1.35" fill="#ff1010" opacity="0.51"/><rect x="6.12" y="31.59" width="0.93" height="1.35" fill="#ff1010" opacity="0.71"/><rect x="7.00" y="31.59" width="0.93" height="1.35" fill="#ff1010" opacity="0.64"/><rect x="7.88" y="31.59" width="0.93" height="1.35" fill="#ff1010" opacity="0.30"/><rect x="0.00" y="35.10" width="0.93" height="1.35" fill="#1212ff" opacity="0.92"/><rect x="0.88" y="35.10" width="0.93" height="1.35" fill="#1212ff" opacity="0.41"/><rect x="1.75" y="35.10" width="0.93" height="1.35" fill="#1212ff" opacity="0.34"/><rect x="2.62" y="35.10" width="0.93" height="1.35" fill="#1212ff" opacity="0.33"/><rect x="3.50" y="35.10" width="0.93" height="1.35" fill="#1212ff" opacity="0.49"/><rect x="4.38" y="35.10" width="0.93" height="1.35" fill="#1212ff" opacity="0.61"/><rect x="6.12" y="35.10" width="0.93" height="1.35" fill="#ff1010" opacity="0.55"/><rect x="7.88" y="35.10" width="0.93" height="1.35" fill="#ff1010" opacity="0.28"/><rect x="8.75" y="35.10" width="0.93" height="1.35" fill="#ff1010" opacity="0.56"/><rect x="9.62" y="35.10" width="0.93" height="1.35" fill="#ff1010" opacity="0.26"/><rect x="10.50" y="35.10" width="0.93" height="1.35" fill="#ff1010" opacity="0.48"/><rect x="11.38" y="35.10" width="0.93" height="1.35" fill="#ff1010" opacity="0.23"/><rect x="13.12" y="35.10" width="0.93" height="1.35" fill="#1212ff" opacity="0.92"/><rect x="14.00" y="35.10" width="0.93" height="1.35" fill="#1212ff" opacity="0.41"/><rect x="14.88" y="35.10" width="0.93" height="1.35" fill="#1212ff" opacity="0.34"/><rect x="15.75" y="35.10" width="0.93" height="1.35" fill="#1212ff" opacity="0.33"/><rect x="16.62" y="35.10" width="0.93" height="1.35" fill="#1212ff" opacity="0.49"/><rect x="17.50" y="35.10" width="0.93" height="1.35" fill="#1212ff" opacity="0.61"/><rect x="18.38" y="35.10" width="0.93" height="1.35" fill="#ff1010" opacity="0.55"/><rect x="19.25" y="35.10" width="0.93" height="1.35" fill="#ff1010" opacity="0.55"/><rect x="20.12" y="35.10" width="0.93" height="1.35" fill="#ff1010" opacity="0.30"/><rect x="0.00" y="36.85" width="0.93" height="1.35" fill="#1212ff" opacity="0.66"/><rect x="0.88" y="36.85" width="0.93" height="1.35" fill="#1212ff" opacity="0.51"/><rect x="1.75" y="36.85" width="0.93" height="1.35" fill="#1212ff" opacity="0.43"/><rect x="2.62" y="36.85" width="0.93" height="1.35" fill="#1212ff" opacity="0.92"/><rect x="3.50" y="36.85" width="0.93" height="1.35" fill="#1212ff" opacity="0.68"/><rect x="4.38" y="36.85" width="0.93" height="1.35" fill="#1212ff" opacity="0.64"/><rect x="5.25" y="36.85" width="0.93" height="1.35" fill="#ff1010" opacity="0.30"/><rect x="6.12" y="36.85" width="0.93" height="1.35" fill="#1212ff" opacity="0.77"/><rect x="7.00" y="36.85" width="0.93" height="1.35" fill="#1212ff" opacity="0.73"/><rect x="7.88" y="36.85" width="0.93" height="1.35" fill="#1212ff" opacity="0.69"/><rect x="8.75" y="36.85" width="0.93" height="1.35" fill="#1212ff" opacity="0.42"/><rect x="9.62" y="36.85" width="0.93" height="1.35" fill="#1212ff" opacity="0.27"/><rect x="10.50" y="36.85" width="0.93" height="1.35" fill="#1212ff" opacity="0.92"/><rect x="11.38" y="36.85" width="0.93" height="1.35" fill="#1212ff" opacity="0.46"/><rect x="12.25" y="36.85" width="0.93" height="1.35" fill="#1212ff" opacity="0.34"/><rect x="13.12" y="36.85" width="0.93" height="1.35" fill="#1212ff" opacity="0.60"/><rect x="14.00" y="36.85" width="0.93" height="1.35" fill="#1212ff" opacity="0.67"/><rect x="14.88" y="36.85" width="0.93" height="1.35" fill="#1212ff" opacity="0.43"/><rect x="15.75" y="36.85" width="0.93" height="1.35" fill="#1212ff" opacity="0.89"/><rect x="16.62" y="36.85" width="0.93" height="1.35" fill="#1212ff" opacity="0.64"/><rect x="17.50" y="36.85" width="0.93" height="1.35" fill="#1212ff" opacity="0.54"/><rect x="18.38" y="36.85" width="0.93" height="1.35" fill="#1212ff" opacity="0.38"/><rect x="19.25" y="36.85" width="0.93" height="1.35" fill="#1212ff" opacity="0.54"/><rect x="20.12" y="36.85" width="0.93" height="1.35" fill="#1212ff" opacity="0.69"/><rect x="21.00" y="36.85" width="0.93" height="1.35" fill="#1212ff" opacity="0.25"/><rect x="21.88" y="36.85" width="0.93" height="1.35" fill="#ff1010" opacity="0.55"/><rect x="22.75" y="36.85" width="0.93" height="1.35" fill="#101010" opacity="0.30"/><rect x="23.62" y="36.85" width="0.93" height="1.35" fill="#101010" opacity="0.22"/><rect x="24.50" y="36.85" width="0.93" height="1.35" fill="#101010" opacity="0.74"/><rect x="25.38" y="36.85" width="0.93" height="1.35" fill="#101010" opacity="0.51"/><rect x="26.25" y="36.85" width="0.93" height="1.35" fill="#101010" opacity="0.61"/><rect x="27.12" y="36.85" width="0.93" height="1.35" fill="#101010" opacity="0.64"/><rect x="28.00" y="36.85" width="0.93" height="1.35" fill="#101010" opacity="0.46"/><rect x="28.88" y="36.85" width="0.93" height="1.35" fill="#101010" opacity="0.46"/><rect x="29.75" y="36.85" width="0.93" height="1.35" fill="#101010" opacity="0.40"/><rect x="30.62" y="36.85" width="0.93" height="1.35" fill="#101010" opacity="0.26"/><rect x="31.50" y="36.85" width="0.93" height="1.35" fill="#101010" opacity="0.34"/><rect x="32.38" y="36.85" width="0.93" height="1.35" fill="#101010" opacity="0.64"/><rect x="33.25" y="36.85" width="0.93" height="1.35" fill="#101010" opacity="0.44"/><rect x="34.12" y="36.85" width="0.93" height="1.35" fill="#101010" opacity="0.30"/><rect x="35.00" y="36.85" width="0.93" height="1.35" fill="#ff1010" opacity="0.30"/><rect x="39.38" y="36.85" width="0.93" height="1.35" fill="#1212ff" opacity="0.88"/><rect x="40.25" y="36.85" width="0.93" height="1.35" fill="#1212ff" opacity="0.51"/><rect x="41.12" y="36.85" width="0.93" height="1.35" fill="#1212ff" opacity="0.44"/><rect x="42.00" y="36.85" width="0.93" height="1.35" fill="#1212ff" opacity="0.51"/><rect x="42.88" y="36.85" width="0.93" height="1.35" fill="#1212ff" opacity="0.36"/><rect x="43.75" y="36.85" width="0.93" height="1.35" fill="#1212ff" opacity="0.39"/><rect x="44.62" y="36.85" width="0.93" height="1.35" fill="#1212ff" opacity="0.34"/><rect x="45.50" y="36.85" width="0.93" height="1.35" fill="#1212ff" opacity="0.84"/><rect x="46.38" y="36.85" width="0.93" height="1.35" fill="#1212ff" opacity="0.38"/><rect x="47.25" y="36.85" width="0.93" height="1.35" fill="#1212ff" opacity="0.74"/><rect x="48.12" y="36.85" width="0.93" height="1.35" fill="#1212ff" opacity="0.56"/><rect x="49.00" y="36.85" width="0.93" height="1.35" fill="#1212ff" opacity="0.88"/><rect x="49.88" y="36.85" width="0.93" height="1.35" fill="#ff1010" opacity="0.55"/><rect x="50.75" y="36.85" width="0.93" height="1.35" fill="#ff1010" opacity="0.30"/><rect x="0.00" y="38.61" width="0.93" height="1.35" fill="#1212ff" opacity="0.62"/><rect x="0.88" y="38.61" width="0.93" height="1.35" fill="#1212ff" opacity="0.74"/><rect x="1.75" y="38.61" width="0.93" height="1.35" fill="#1212ff" opacity="0.51"/><rect x="2.62" y="38.61" width="0.93" height="1.35" fill="#1212ff" opacity="0.58"/><rect x="3.50" y="38.61" width="0.93" height="1.35" fill="#1212ff" opacity="0.92"/><rect x="4.38" y="38.61" width="0.93" height="1.35" fill="#1212ff" opacity="0.53"/><rect x="5.25" y="38.61" width="0.93" height="1.35" fill="#ff1010" opacity="0.30"/><rect x="6.12" y="38.61" width="0.93" height="1.35" fill="#1212ff" opacity="0.25"/><rect x="7.00" y="38.61" width="0.93" height="1.35" fill="#1212ff" opacity="0.44"/><rect x="7.88" y="38.61" width="0.93" height="1.35" fill="#1212ff" opacity="0.47"/><rect x="8.75" y="38.61" width="0.93" height="1.35" fill="#1212ff" opacity="0.26"/><rect x="9.62" y="38.61" width="0.93" height="1.35" fill="#1212ff" opacity="0.79"/><rect x="10.50" y="38.61" width="0.93" height="1.35" fill="#1212ff" opacity="0.86"/><rect x="11.38" y="38.61" width="0.93" height="1.35" fill="#1212ff" opacity="0.53"/><rect x="12.25" y="38.61" width="0.93" height="1.35" fill="#1212ff" opacity="0.38"/><rect x="13.12" y="38.61" width="0.93" height="1.35" fill="#1212ff" opacity="0.74"/><rect x="14.00" y="38.61" width="0.93" height="1.35" fill="#1212ff" opacity="0.54"/><rect x="14.88" y="38.61" width="0.93" height="1.35" fill="#1212ff" opacity="0.41"/><rect x="15.75" y="38.61" width="0.93" height="1.35" fill="#1212ff" opacity="0.78"/><rect x="16.62" y="38.61" width="0.93" height="1.35" fill="#1212ff" opacity="0.53"/><rect x="17.50" y="38.61" width="0.93" height="1.35" fill="#1212ff" opacity="0.66"/><rect x="18.38" y="38.61" width="0.93" height="1.35" fill="#1212ff" opacity="0.56"/><rect x="19.25" y="38.61" width="0.93" height="1.35" fill="#1212ff" opacity="0.92"/><rect x="20.12" y="38.61" width="0.93" height="1.35" fill="#1212ff" opacity="0.59"/><rect x="21.00" y="38.61" width="0.93" height="1.35" fill="#1212ff" opacity="0.24"/><rect x="21.88" y="38.61" width="0.93" height="1.35" fill="#ff1010" opacity="0.55"/><rect x="22.75" y="38.61" width="0.93" height="1.35" fill="#101010" opacity="0.30"/><rect x="23.62" y="38.61" width="0.93" height="1.35" fill="#101010" opacity="0.70"/><rect x="24.50" y="38.61" width="0.93" height="1.35" fill="#101010" opacity="0.61"/><rect x="25.38" y="38.61" width="0.93" height="1.35" fill="#101010" opacity="0.68"/><rect x="26.25" y="38.61" width="0.93" height="1.35" fill="#101010" opacity="0.27"/><rect x="27.12" y="38.61" width="0.93" height="1.35" fill="#101010" opacity="0.90"/><rect x="28.00" y="38.61" width="0.93" height="1.35" fill="#101010" opacity="0.87"/><rect x="28.88" y="38.61" width="0.93" height="1.35" fill="#101010" opacity="0.90"/><rect x="29.75" y="38.61" width="0.93" height="1.35" fill="#101010" opacity="0.80"/><rect x="30.62" y="38.61" width="0.93" height="1.35" fill="#101010" opacity="0.91"/><rect x="31.50" y="38.61" width="0.93" height="1.35" fill="#101010" opacity="0.51"/><rect x="32.38" y="38.61" width="0.93" height="1.35" fill="#101010" opacity="0.45"/><rect x="33.25" y="38.61" width="0.93" height="1.35" fill="#101010" opacity="0.52"/><rect x="34.12" y="38.61" width="0.93" height="1.35" fill="#101010" opacity="0.30"/><rect x="35.00" y="38.61" width="0.93" height="1.35" fill="#101010" opacity="0.46"/><rect x="35.88" y="38.61" width="0.93" height="1.35" fill="#101010" opacity="0.78"/><rect x="36.75" y="38.61" width="0.93" height="1.35" fill="#101010" opacity="0.30"/><rect x="37.62" y="38.61" width="0.93" height="1.35" fill="#ff1010" opacity="0.30"/><rect x="39.38" y="38.61" width="0.93" height="1.35" fill="#1212ff" opacity="0.25"/><rect x="40.25" y="38.61" width="0.93" height="1.35" fill="#1212ff" opacity="0.44"/><rect x="41.12" y="38.61" width="0.93" height="1.35" fill="#1212ff" opacity="0.66"/><rect x="42.00" y="38.61" width="0.93" height="1.35" fill="#1212ff" opacity="0.68"/><rect x="42.88" y="38.61" width="0.93" height="1.35" fill="#1212ff" opacity="0.39"/><rect x="43.75" y="38.61" width="0.93" height="1.35" fill="#1212ff" opacity="0.32"/><rect x="44.62" y="38.61" width="0.93" height="1.35" fill="#1212ff" opacity="0.86"/><rect x="45.50" y="38.61" width="0.93" height="1.35" fill="#1212ff" opacity="0.76"/><rect x="46.38" y="38.61" width="0.93" height="1.35" fill="#1212ff" opacity="0.74"/><rect x="47.25" y="38.61" width="0.93" height="1.35" fill="#1212ff" opacity="0.94"/><rect x="48.12" y="38.61" width="0.93" height="1.35" fill="#1212ff" opacity="0.64"/><rect x="49.00" y="38.61" width="0.93" height="1.35" fill="#1212ff" opacity="0.64"/><rect x="49.88" y="38.61" width="0.93" height="1.35" fill="#1212ff" opacity="0.54"/><rect x="50.75" y="38.61" width="0.93" height="1.35" fill="#ff1010" opacity="0.30"/><rect x="51.62" y="38.61" width="0.93" height="1.35" fill="#1212ff" opacity="0.31"/><rect x="52.50" y="38.61" width="0.93" height="1.35" fill="#1212ff" opacity="0.23"/><rect x="53.38" y="38.61" width="0.93" height="1.35" fill="#1212ff" opacity="0.42"/><rect x="54.25" y="38.61" width="0.93" height="1.35" fill="#1212ff" opacity="0.38"/><rect x="55.12" y="38.61" width="0.93" height="1.35" fill="#1212ff" opacity="0.34"/><rect x="56.00" y="38.61" width="0.93" height="1.35" fill="#1212ff" opacity="0.78"/><rect x="56.88" y="38.61" width="0.93" height="1.35" fill="#1212ff" opacity="0.92"/><rect x="57.75" y="38.61" width="0.93" height="1.35" fill="#1212ff" opacity="0.85"/><rect x="58.62" y="38.61" width="0.93" height="1.35" fill="#1212ff" opacity="0.24"/><rect x="59.50" y="38.61" width="0.93" height="1.35" fill="#1212ff" opacity="0.78"/><rect x="60.38" y="38.61" width="0.93" height="1.35" fill="#1212ff" opacity="0.43"/><rect x="61.25" y="38.61" width="0.93" height="1.35" fill="#1212ff" opacity="0.95"/><rect x="62.12" y="38.61" width="0.93" height="1.35" fill="#1212ff" opacity="0.89"/><rect x="63.00" y="38.61" width="0.93" height="1.35" fill="#1212ff" opacity="0.31"/><rect x="63.88" y="38.61" width="0.93" height="1.35" fill="#1212ff" opacity="0.90"/><rect x="64.75" y="38.61" width="0.93" height="1.35" fill="#ff1010" opacity="0.55"/><rect x="65.62" y="38.61" width="0.93" height="1.35" fill="#ff1010" opacity="0.30"/><rect x="0.00" y="40.36" width="0.93" height="1.35" fill="#1212ff" opacity="0.35"/><rect x="0.88" y="40.36" width="0.93" height="1.35" fill="#1212ff" opacity="0.42"/><rect x="1.75" y="40.36" width="0.93" height="1.35" fill="#1212ff" opacity="0.94"/><rect x="2.62" y="40.36" width="0.93" height="1.35" fill="#1212ff" opacity="0.96"/><rect x="3.50" y="40.36" width="0.93" height="1.35" fill="#1212ff" opacity="0.86"/><rect x="4.38" y="40.36" width="0.93" height="1.35" fill="#1212ff" opacity="0.92"/><rect x="5.25" y="40.36" width="0.93" height="1.35" fill="#ff1010" opacity="0.30"/><rect x="6.12" y="40.36" width="0.93" height="1.35" fill="#1212ff" opacity="0.91"/><rect x="7.00" y="40.36" width="0.93" height="1.35" fill="#1212ff" opacity="0.42"/><rect x="7.88" y="40.36" width="0.93" height="1.35" fill="#1212ff" opacity="0.86"/><rect x="8.75" y="40.36" width="0.93" height="1.35" fill="#1212ff" opacity="0.64"/><rect x="9.62" y="40.36" width="0.93" height="1.35" fill="#1212ff" opacity="0.71"/><rect x="11.38" y="40.36" width="0.93" height="1.35" fill="#ff1010" opacity="0.55"/><rect x="0.00" y="42.12" width="0.93" height="1.35" fill="#101010" opacity="0.30"/><rect x="0.88" y="42.12" width="0.93" height="1.35" fill="#101010" opacity="0.27"/><rect x="1.75" y="42.12" width="0.93" height="1.35" fill="#101010" opacity="0.50"/><rect x="2.62" y="42.12" width="0.93" height="1.35" fill="#101010" opacity="0.62"/><rect x="3.50" y="42.12" width="0.93" height="1.35" fill="#101010" opacity="0.66"/><rect x="4.38" y="42.12" width="0.93" height="1.35" fill="#101010" opacity="0.24"/><rect x="5.25" y="42.12" width="0.93" height="1.35" fill="#101010" opacity="0.58"/><rect x="6.12" y="42.12" width="0.93" height="1.35" fill="#101010" opacity="0.32"/><rect x="0.00" y="43.88" width="0.93" height="1.35" fill="#101010" opacity="0.75"/><rect x="3.50" y="43.88" width="0.93" height="1.35" fill="#101010" opacity="0.93"/><rect x="4.38" y="43.88" width="0.93" height="1.35" fill="#101010" opacity="0.76"/><rect x="5.25" y="43.88" width="0.93" height="1.35" fill="#101010" opacity="0.52"/><rect x="6.12" y="43.88" width="0.93" height="1.35" fill="#101010" opacity="0.73"/><rect x="7.00" y="43.88" width="0.93" height="1.35" fill="#101010" opacity="0.78"/><rect x="7.88" y="43.88" width="0.93" height="1.35" fill="#101010" opacity="0.75"/><rect x="8.75" y="43.88" width="0.93" height="1.35" fill="#101010" opacity="0.83"/><rect x="9.62" y="43.88" width="0.93" height="1.35" fill="#101010" opacity="0.54"/><rect x="10.50" y="43.88" width="0.93" height="1.35" fill="#101010" opacity="0.69"/><rect x="11.38" y="43.88" width="0.93" height="1.35" fill="#101010" opacity="0.41"/><rect x="12.25" y="43.88" width="0.93" height="1.35" fill="#101010" opacity="0.92"/><rect x="13.12" y="43.88" width="0.93" height="1.35" fill="#101010" opacity="0.75"/><rect x="14.00" y="43.88" width="0.93" height="1.35" fill="#101010" opacity="0.30"/><rect x="14.88" y="43.88" width="0.93" height="1.35" fill="#101010" opacity="0.42"/><rect x="15.75" y="43.88" width="0.93" height="1.35" fill="#101010" opacity="0.34"/><rect x="16.62" y="43.88" width="0.93" height="1.35" fill="#101010" opacity="0.80"/><rect x="17.50" y="43.88" width="0.93" height="1.35" fill="#101010" opacity="0.77"/><rect x="18.38" y="43.88" width="0.93" height="1.35" fill="#101010" opacity="0.31"/><rect x="19.25" y="43.88" width="0.93" height="1.35" fill="#101010" opacity="0.24"/><rect x="0.00" y="45.63" width="0.93" height="1.35" fill="#101010" opacity="0.75"/><rect x="0.88" y="45.63" width="0.93" height="1.35" fill="#101010" opacity="0.78"/><rect x="1.75" y="45.63" width="0.93" height="1.35" fill="#101010" opacity="0.87"/><rect x="0.00" y="47.38" width="0.93" height="1.35" fill="#101010" opacity="0.75"/><rect x="3.50" y="47.38" width="0.93" height="1.35" fill="#101010" opacity="0.43"/><rect x="4.38" y="47.38" width="0.93" height="1.35" fill="#101010" opacity="0.23"/><rect x="5.25" y="47.38" width="0.93" height="1.35" fill="#101010" opacity="0.78"/><rect x="6.12" y="47.38" width="0.93" height="1.35" fill="#101010" opacity="0.89"/><rect x="7.00" y="47.38" width="0.93" height="1.35" fill="#101010" opacity="0.77"/><rect x="7.88" y="47.38" width="0.93" height="1.35" fill="#101010" opacity="0.32"/><rect x="8.75" y="47.38" width="0.93" height="1.35" fill="#101010" opacity="0.92"/><rect x="9.62" y="47.38" width="0.93" height="1.35" fill="#101010" opacity="0.59"/><rect x="10.50" y="47.38" width="0.93" height="1.35" fill="#101010" opacity="0.76"/><rect x="11.38" y="47.38" width="0.93" height="1.35" fill="#101010" opacity="0.89"/><rect x="12.25" y="47.38" width="0.93" height="1.35" fill="#101010" opacity="0.30"/><rect x="13.12" y="47.38" width="0.93" height="1.35" fill="#101010" opacity="0.84"/><rect x="14.00" y="47.38" width="0.93" height="1.35" fill="#101010" opacity="0.56"/><rect x="14.88" y="47.38" width="0.93" height="1.35" fill="#101010" opacity="0.45"/><rect x="15.75" y="47.38" width="0.93" height="1.35" fill="#101010" opacity="0.83"/><rect x="16.62" y="47.38" width="0.93" height="1.35" fill="#101010" opacity="0.89"/><rect x="17.50" y="47.38" width="0.93" height="1.35" fill="#101010" opacity="0.96"/><rect x="18.38" y="47.38" width="0.93" height="1.35" fill="#101010" opacity="0.51"/><rect x="19.25" y="47.38" width="0.93" height="1.35" fill="#101010" opacity="0.90"/><rect x="20.12" y="47.38" width="0.93" height="1.35" fill="#101010" opacity="0.61"/><rect x="21.00" y="47.38" width="0.93" height="1.35" fill="#101010" opacity="0.46"/><rect x="21.88" y="47.38" width="0.93" height="1.35" fill="#101010" opacity="0.26"/><rect x="22.75" y="47.38" width="0.93" height="1.35" fill="#101010" opacity="0.59"/><rect x="24.50" y="47.38" width="0.93" height="1.35" fill="#101010" opacity="0.55"/><rect x="25.38" y="47.38" width="0.93" height="1.35" fill="#101010" opacity="0.27"/><rect x="26.25" y="47.38" width="0.93" height="1.35" fill="#101010" opacity="0.41"/><rect x="28.00" y="47.38" width="0.93" height="1.35" fill="#101010" opacity="0.91"/><rect x="28.88" y="47.38" width="0.93" height="1.35" fill="#101010" opacity="0.69"/><rect x="29.75" y="47.38" width="0.93" height="1.35" fill="#101010" opacity="0.44"/><rect x="30.62" y="47.38" width="0.93" height="1.35" fill="#101010" opacity="0.73"/><rect x="31.50" y="47.38" width="0.93" height="1.35" fill="#101010" opacity="0.78"/><rect x="32.38" y="47.38" width="0.93" height="1.35" fill="#101010" opacity="0.72"/><rect x="33.25" y="47.38" width="0.93" height="1.35" fill="#101010" opacity="0.55"/><rect x="34.12" y="47.38" width="0.93" height="1.35" fill="#101010" opacity="0.38"/><rect x="35.00" y="47.38" width="0.93" height="1.35" fill="#101010" opacity="0.79"/><rect x="35.88" y="47.38" width="0.93" height="1.35" fill="#101010" opacity="0.70"/><rect x="36.75" y="47.38" width="0.93" height="1.35" fill="#101010" opacity="0.60"/><rect x="37.62" y="47.38" width="0.93" height="1.35" fill="#101010" opacity="0.88"/><rect x="0.00" y="49.14" width="0.93" height="1.35" fill="#101010" opacity="0.75"/><rect x="0.88" y="49.14" width="0.93" height="1.35" fill="#101010" opacity="0.95"/><rect x="1.75" y="49.14" width="0.93" height="1.35" fill="#101010" opacity="0.50"/><rect x="2.62" y="49.14" width="0.93" height="1.35" fill="#101010" opacity="0.55"/><rect x="0.00" y="50.89" width="0.93" height="1.35" fill="#101010" opacity="0.75"/><rect x="3.50" y="50.89" width="0.93" height="1.35" fill="#101010" opacity="0.30"/><rect x="5.25" y="50.89" width="0.93" height="1.35" fill="#ff1010" opacity="0.55"/><rect x="7.00" y="50.89" width="0.93" height="1.35" fill="#1212ff" opacity="0.28"/><rect x="7.88" y="50.89" width="0.93" height="1.35" fill="#1212ff" opacity="0.94"/><rect x="8.75" y="50.89" width="0.93" height="1.35" fill="#1212ff" opacity="0.91"/><rect x="9.62" y="50.89" width="0.93" height="1.35" fill="#1212ff" opacity="0.64"/><rect x="10.50" y="50.89" width="0.93" height="1.35" fill="#1212ff" opacity="0.44"/><rect x="11.38" y="50.89" width="0.93" height="1.35" fill="#1212ff" opacity="0.71"/><rect x="12.25" y="50.89" width="0.93" height="1.35" fill="#1212ff" opacity="0.60"/><rect x="13.12" y="50.89" width="0.93" height="1.35" fill="#1212ff" opacity="0.61"/><rect x="14.00" y="50.89" width="0.93" height="1.35" fill="#1212ff" opacity="0.71"/><rect x="14.88" y="50.89" width="0.93" height="1.35" fill="#1212ff" opacity="0.62"/><rect x="15.75" y="50.89" width="0.93" height="1.35" fill="#1212ff" opacity="0.82"/><rect x="16.62" y="50.89" width="0.93" height="1.35" fill="#1212ff" opacity="0.90"/><rect x="17.50" y="50.89" width="0.93" height="1.35" fill="#1212ff" opacity="0.41"/><rect x="18.38" y="50.89" width="0.93" height="1.35" fill="#1212ff" opacity="0.85"/><rect x="19.25" y="50.89" width="0.93" height="1.35" fill="#1212ff" opacity="0.36"/><rect x="21.00" y="50.89" width="0.93" height="1.35" fill="#ff1010" opacity="0.55"/><rect x="22.75" y="50.89" width="0.93" height="1.35" fill="#101010" opacity="0.30"/><rect x="0.00" y="52.65" width="0.93" height="1.35" fill="#101010" opacity="0.75"/><rect x="3.50" y="52.65" width="0.93" height="1.35" fill="#101010" opacity="0.30"/><rect x="5.25" y="52.65" width="0.93" height="1.35" fill="#ff1010" opacity="0.55"/><rect x="7.00" y="52.65" width="0.93" height="1.35" fill="#1212ff" opacity="0.78"/><rect x="7.88" y="52.65" width="0.93" height="1.35" fill="#1212ff" opacity="0.69"/><rect x="8.75" y="52.65" width="0.93" height="1.35" fill="#1212ff" opacity="0.23"/><rect x="9.62" y="52.65" width="0.93" height="1.35" fill="#1212ff" opacity="0.41"/><rect x="10.50" y="52.65" width="0.93" height="1.35" fill="#1212ff" opacity="0.95"/><rect x="11.38" y="52.65" width="0.93" height="1.35" fill="#1212ff" opacity="0.31"/><rect x="12.25" y="52.65" width="0.93" height="1.35" fill="#1212ff" opacity="0.54"/><rect x="13.12" y="52.65" width="0.93" height="1.35" fill="#1212ff" opacity="0.30"/><rect x="14.00" y="52.65" width="0.93" height="1.35" fill="#1212ff" opacity="0.59"/><rect x="14.88" y="52.65" width="0.93" height="1.35" fill="#1212ff" opacity="0.42"/><rect x="15.75" y="52.65" width="0.93" height="1.35" fill="#1212ff" opacity="0.68"/><rect x="16.62" y="52.65" width="0.93" height="1.35" fill="#1212ff" opacity="0.61"/><rect x="17.50" y="52.65" width="0.93" height="1.35" fill="#1212ff" opacity="0.26"/><rect x="18.38" y="52.65" width="0.93" height="1.35" fill="#1212ff" opacity="0.85"/><rect x="19.25" y="52.65" width="0.93" height="1.35" fill="#1212ff" opacity="0.66"/><rect x="20.12" y="52.65" width="0.93" height="1.35" fill="#1212ff" opacity="0.75"/><rect x="21.00" y="52.65" width="0.93" height="1.35" fill="#1212ff" opacity="0.83"/><rect x="21.88" y="52.65" width="0.93" height="1.35" fill="#1212ff" opacity="0.96"/><rect x="22.75" y="52.65" width="0.93" height="1.35" fill="#1212ff" opacity="0.78"/><rect x="23.62" y="52.65" width="0.93" height="1.35" fill="#1212ff" opacity="0.67"/><rect x="25.38" y="52.65" width="0.93" height="1.35" fill="#ff1010" opacity="0.55"/><rect x="27.12" y="52.65" width="0.93" height="1.35" fill="#101010" opacity="0.30"/><rect x="0.00" y="54.41" width="0.93" height="1.35" fill="#101010" opacity="0.75"/><rect x="3.50" y="54.41" width="0.93" height="1.35" fill="#101010" opacity="0.30"/><rect x="5.25" y="54.41" width="0.93" height="1.35" fill="#ff1010" opacity="0.55"/><rect x="7.00" y="54.41" width="0.93" height="1.35" fill="#1212ff" opacity="0.59"/><rect x="7.88" y="54.41" width="0.93" height="1.35" fill="#1212ff" opacity="0.66"/><rect x="8.75" y="54.41" width="0.93" height="1.35" fill="#1212ff" opacity="0.74"/><rect x="9.62" y="54.41" width="0.93" height="1.35" fill="#1212ff" opacity="0.66"/><rect x="10.50" y="54.41" width="0.93" height="1.35" fill="#1212ff" opacity="0.54"/><rect x="11.38" y="54.41" width="0.93" height="1.35" fill="#1212ff" opacity="0.46"/><rect x="12.25" y="54.41" width="0.93" height="1.35" fill="#1212ff" opacity="0.92"/><rect x="13.12" y="54.41" width="0.93" height="1.35" fill="#1212ff" opacity="0.72"/><rect x="14.00" y="54.41" width="0.93" height="1.35" fill="#1212ff" opacity="0.76"/><rect x="14.88" y="54.41" width="0.93" height="1.35" fill="#1212ff" opacity="0.48"/><rect x="15.75" y="54.41" width="0.93" height="1.35" fill="#1212ff" opacity="0.36"/><rect x="16.62" y="54.41" width="0.93" height="1.35" fill="#1212ff" opacity="0.26"/><rect x="17.50" y="54.41" width="0.93" height="1.35" fill="#1212ff" opacity="0.28"/><rect x="18.38" y="54.41" width="0.93" height="1.35" fill="#1212ff" opacity="0.37"/><rect x="19.25" y="54.41" width="0.93" height="1.35" fill="#1212ff" opacity="0.87"/><rect x="20.12" y="54.41" width="0.93" height="1.35" fill="#1212ff" opacity="0.37"/><rect x="21.00" y="54.41" width="0.93" height="1.35" fill="#1212ff" opacity="0.96"/><rect x="21.88" y="54.41" width="0.93" height="1.35" fill="#1212ff" opacity="0.78"/><rect x="22.75" y="54.41" width="0.93" height="1.35" fill="#1212ff" opacity="0.25"/><rect x="23.62" y="54.41" width="0.93" height="1.35" fill="#1212ff" opacity="0.72"/><rect x="24.50" y="54.41" width="0.93" height="1.35" fill="#1212ff" opacity="0.23"/><rect x="25.38" y="54.41" width="0.93" height="1.35" fill="#1212ff" opacity="0.42"/><rect x="27.12" y="54.41" width="0.93" height="1.35" fill="#ff1010" opacity="0.55"/><rect x="28.88" y="54.41" width="0.93" height="1.35" fill="#101010" opacity="0.30"/><rect x="0.00" y="56.16" width="0.93" height="1.35" fill="#101010" opacity="0.75"/><rect x="3.50" y="56.16" width="0.93" height="1.35" fill="#101010" opacity="0.30"/><rect x="5.25" y="56.16" width="0.93" height="1.35" fill="#ff1010" opacity="0.55"/><rect x="7.00" y="56.16" width="0.93" height="1.35" fill="#1212ff" opacity="0.47"/><rect x="7.88" y="56.16" width="0.93" height="1.35" fill="#1212ff" opacity="0.68"/><rect x="8.75" y="56.16" width="0.93" height="1.35" fill="#1212ff" opacity="0.56"/><rect x="9.62" y="56.16" width="0.93" height="1.35" fill="#1212ff" opacity="0.63"/><rect x="10.50" y="56.16" width="0.93" height="1.35" fill="#1212ff" opacity="0.88"/><rect x="11.38" y="56.16" width="0.93" height="1.35" fill="#1212ff" opacity="0.58"/><rect x="12.25" y="56.16" width="0.93" height="1.35" fill="#1212ff" opacity="0.39"/><rect x="13.12" y="56.16" width="0.93" height="1.35" fill="#1212ff" opacity="0.84"/><rect x="14.00" y="56.16" width="0.93" height="1.35" fill="#1212ff" opacity="0.60"/><rect x="14.88" y="56.16" width="0.93" height="1.35" fill="#1212ff" opacity="0.76"/><rect x="15.75" y="56.16" width="0.93" height="1.35" fill="#1212ff" opacity="0.85"/><rect x="16.62" y="56.16" width="0.93" height="1.35" fill="#1212ff" opacity="0.40"/><rect x="17.50" y="56.16" width="0.93" height="1.35" fill="#1212ff" opacity="0.53"/><rect x="18.38" y="56.16" width="0.93" height="1.35" fill="#1212ff" opacity="0.35"/><rect x="19.25" y="56.16" width="0.93" height="1.35" fill="#1212ff" opacity="0.83"/><rect x="20.12" y="56.16" width="0.93" height="1.35" fill="#1212ff" opacity="0.71"/><rect x="21.00" y="56.16" width="0.93" height="1.35" fill="#1212ff" opacity="0.70"/><rect x="22.75" y="56.16" width="0.93" height="1.35" fill="#ff1010" opacity="0.55"/><rect x="24.50" y="56.16" width="0.93" height="1.35" fill="#101010" opacity="0.30"/></g></svg>
<div class="vs"></div>
<div class="ab" style="left:735px;top:35px;width:15px;height:18px"></div>
<div class="ab" style="left:735px;top:562px;width:15px;height:18px"></div>
<div class="thumb" style="left:735px;top:53px;width:15.5px;height:476px"></div>
<svg style="position:absolute;left:740px;top:42px" width="5" height="3" viewBox="0 0 5 3"><path d="M0.2 2.9L2.500 0.2L4.800 2.9z" fill="#404040"/></svg>
<svg style="position:absolute;left:740px;top:570.3px" width="5" height="3" viewBox="0 0 5 3"><path d="M0.2 0.1L2.500 2.800L4.800 0.1z" fill="#404040"/></svg>
<div class="hs"></div>
<div class="ab" style="left:4px;top:580px;width:18px;height:15px"></div>
<div class="ab" style="left:717px;top:580px;width:18px;height:15px"></div>
<div class="thumb" style="left:22.3px;top:580px;width:680.5px;height:15.5px"></div>
<svg style="position:absolute;left:12px;top:586px" width="3" height="5" viewBox="0 0 3 5"><path d="M2.900 0.100L0.2 2.400L2.900 4.700z" fill="#404040"/></svg>
<svg style="position:absolute;left:724.6px;top:586px" width="3" height="5" viewBox="0 0 3 5"><path d="M0.1 0.100L2.800 2.400L0.1 4.700z" fill="#404040"/></svg>
<div class="corner"></div>
</body></html>
